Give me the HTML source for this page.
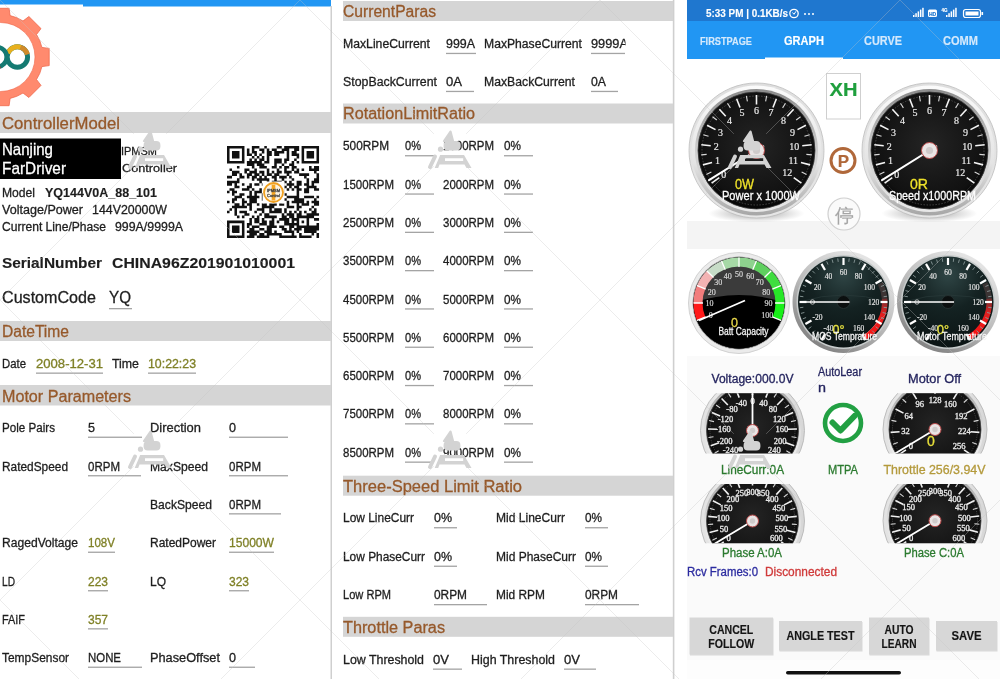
<!DOCTYPE html><html><head><meta charset="utf-8"><style>html,body{margin:0;padding:0;background:#fff;width:1000px;height:679px;overflow:hidden}svg{display:block;will-change:transform;font-family:"Liberation Sans",sans-serif}</style></head><body>
<svg width="1000" height="679" viewBox="0 0 1000 679">
<defs>
<linearGradient id="chrome" x1="0" y1="0" x2="0" y2="1"><stop offset="0" stop-color="#e4e4e4"/><stop offset="0.5" stop-color="#f6f6f6"/><stop offset="0.82" stop-color="#c4c4c4"/><stop offset="1" stop-color="#8e8e8e"/></linearGradient>
<linearGradient id="chromeIn" x1="0" y1="0" x2="0" y2="1"><stop offset="0" stop-color="#8e8e8e"/><stop offset="0.45" stop-color="#dcdcdc"/><stop offset="1" stop-color="#fafafa"/></linearGradient>
<radialGradient id="face" cx="0.5" cy="0.45" r="0.55"><stop offset="0" stop-color="#242424"/><stop offset="0.85" stop-color="#111"/><stop offset="1" stop-color="#050505"/></radialGradient>
<linearGradient id="tring" x1="0.8" y1="0" x2="0.2" y2="1"><stop offset="0" stop-color="#ececec"/><stop offset="0.5" stop-color="#bdbdbd"/><stop offset="1" stop-color="#7a7a7a"/></linearGradient>
<radialGradient id="tface" cx="0.5" cy="0.2" r="0.85"><stop offset="0" stop-color="#2f4545"/><stop offset="0.45" stop-color="#142222"/><stop offset="1" stop-color="#0a1212"/></radialGradient>
<linearGradient id="red" x1="0" y1="0" x2="0" y2="1"><stop offset="0" stop-color="#703030"/><stop offset="0.35" stop-color="#e02020"/><stop offset="1" stop-color="#ff1010"/></linearGradient>
<linearGradient id="shadow" x1="0" y1="0" x2="0" y2="1"><stop offset="0" stop-color="#9a9a9a" stop-opacity="0.8"/><stop offset="1" stop-color="#ffffff" stop-opacity="0"/></linearGradient>
<linearGradient id="bg1" x1="0" y1="0" x2="0" y2="1"><stop offset="0" stop-color="#dedede"/><stop offset="1" stop-color="#e6e6e6"/></linearGradient>
<linearGradient id="bg2" x1="0" y1="0" x2="0" y2="1"><stop offset="0" stop-color="#fbfbfb"/><stop offset="0.6" stop-color="#e4e4e4"/><stop offset="1" stop-color="#a6a6a6"/></linearGradient>
<linearGradient id="bg3" x1="0" y1="0" x2="0" y2="1"><stop offset="0" stop-color="#8c8c8c"/><stop offset="0.5" stop-color="#cdcdcd"/><stop offset="1" stop-color="#e8e8e8"/></linearGradient>
<linearGradient id="sring" x1="0" y1="0" x2="1" y2="0"><stop offset="0" stop-color="#e2e2e2"/><stop offset="0.5" stop-color="#f4f4f4"/><stop offset="1" stop-color="#d6d6d6"/></linearGradient>
<linearGradient id="sring2" x1="0" y1="0" x2="0" y2="1"><stop offset="0" stop-color="#9a9a9a"/><stop offset="0.5" stop-color="#e0e0e0"/><stop offset="1" stop-color="#fafafa"/></linearGradient>
<radialGradient id="shad2" cx="0.5" cy="0.5" r="0.5"><stop offset="0" stop-color="#707070" stop-opacity="0.7"/><stop offset="1" stop-color="#909090" stop-opacity="0"/></radialGradient>
</defs>
<rect x="0" y="0" width="1000" height="679" fill="#fff"/>
<rect x="0" y="0" width="331" height="679" fill="#ffffff"/>
<rect x="0" y="0" width="83" height="4.5" fill="#2196f3"/>
<rect x="83" y="0" width="248" height="6.5" fill="#2196f3"/>
<rect x="330.5" y="6" width="1.6" height="673" fill="#cfcfcf"/>
<path d="M39.8,40.7 L41.9,47.4 L49.2,48.4 L49.2,65.6 L41.9,66.6 L39.8,73.3 L36.5,79.5 L41.0,85.4 L28.9,97.5 L23.0,93.0 L16.8,96.3 L10.1,98.4 L9.1,105.7 L-8.1,105.7 L-9.1,98.4 L-15.8,96.3 L-22.0,93.0 L-27.9,97.5 L-40.0,85.4 L-35.5,79.5 L-38.8,73.3 L-40.9,66.6 L-48.2,65.6 L-48.2,48.4 L-40.9,47.4 L-38.8,40.7 L-35.5,34.5 L-40.0,28.6 L-27.9,16.5 L-22.0,21.0 L-15.8,17.7 L-9.1,15.6 L-8.1,8.3 L9.1,8.3 L10.1,15.6 L16.8,17.7 L23.0,21.0 L28.9,16.5 L41.0,28.6 L36.5,34.5Z" fill="#ff8a6e" stroke="#ef6a4e" stroke-width="0.8" stroke-linejoin="round"/>
<circle cx="0.5" cy="57" r="34.5" fill="#ffffff" stroke="#ef6a4e" stroke-width="0.6"/>
<circle cx="17.4" cy="57" r="10.2" fill="none" stroke="#147a72" stroke-width="4.9"/>
<path d="M7.8,53.5 A10.2 10.2 0 0 1 21,47.5" fill="none" stroke="#e8b01e" stroke-width="4.9"/>
<path d="M20.5,47.4 A10.2 10.2 0 0 1 27.4,54.5" fill="none" stroke="#cf8a2a" stroke-width="4.9"/>
<circle cx="-3" cy="57" r="9.8" fill="none" stroke="#147a72" stroke-width="4.6"/>
<path d="M0,66 A9.8 9.8 0 0 1 -3,66.8" fill="none" stroke="#b03030" stroke-width="4.6"/>
<rect x="0" y="112" width="331" height="21" fill="#d5d5d5"/>
<text x="2" y="128.5" font-size="16" fill="#96592b" textLength="118" lengthAdjust="spacingAndGlyphs" stroke="#96592b" stroke-width="0.3">ControllerModel</text>
<rect x="0" y="138.5" width="121" height="40.5" fill="#000"/>
<text x="2" y="155.4" font-size="16.5" fill="#fff" textLength="51" lengthAdjust="spacingAndGlyphs" stroke="#fff" stroke-width="0.3">Nanjing</text>
<text x="2" y="174.4" font-size="16.5" fill="#fff" textLength="64" lengthAdjust="spacingAndGlyphs" stroke="#fff" stroke-width="0.3">FarDriver</text>
<text x="121" y="155.4" font-size="11.5" fill="#1e1e1e" textLength="36" lengthAdjust="spacingAndGlyphs" stroke="#1e1e1e" stroke-width="0.3">IPMSM</text>
<text x="122" y="171.6" font-size="11.5" fill="#1e1e1e" textLength="55" lengthAdjust="spacingAndGlyphs" stroke="#1e1e1e" stroke-width="0.3">Controller</text>
<text x="2" y="196.5" font-size="12.5" fill="#1e1e1e" textLength="33" lengthAdjust="spacingAndGlyphs" stroke="#1e1e1e" stroke-width="0.3">Model</text>
<text x="45" y="196.5" font-size="12.5" fill="#1e1e1e" font-weight="bold" textLength="112" lengthAdjust="spacingAndGlyphs" stroke="#1e1e1e" stroke-width="0.15">YQ144V0A_88_101</text>
<text x="2" y="214" font-size="12.5" fill="#1e1e1e" textLength="81" lengthAdjust="spacingAndGlyphs" stroke="#1e1e1e" stroke-width="0.3">Voltage/Power</text>
<text x="92" y="214" font-size="12.5" fill="#1e1e1e" textLength="75" lengthAdjust="spacingAndGlyphs" stroke="#1e1e1e" stroke-width="0.3">144V20000W</text>
<text x="2" y="230.6" font-size="12.5" fill="#1e1e1e" textLength="104" lengthAdjust="spacingAndGlyphs" stroke="#1e1e1e" stroke-width="0.3">Current Line/Phase</text>
<text x="115" y="230.6" font-size="12.5" fill="#1e1e1e" textLength="68" lengthAdjust="spacingAndGlyphs" stroke="#1e1e1e" stroke-width="0.3">999A/9999A</text>
<path d="M227.00,146.00h2.54v2.54h-2.54zM229.49,146.00h2.54v2.54h-2.54zM231.97,146.00h2.54v2.54h-2.54zM234.46,146.00h2.54v2.54h-2.54zM236.95,146.00h2.54v2.54h-2.54zM239.43,146.00h2.54v2.54h-2.54zM241.92,146.00h2.54v2.54h-2.54zM251.86,146.00h2.54v2.54h-2.54zM254.35,146.00h2.54v2.54h-2.54zM256.84,146.00h2.54v2.54h-2.54zM264.30,146.00h2.54v2.54h-2.54zM276.73,146.00h2.54v2.54h-2.54zM279.22,146.00h2.54v2.54h-2.54zM284.19,146.00h2.54v2.54h-2.54zM286.68,146.00h2.54v2.54h-2.54zM289.16,146.00h2.54v2.54h-2.54zM291.65,146.00h2.54v2.54h-2.54zM294.14,146.00h2.54v2.54h-2.54zM296.62,146.00h2.54v2.54h-2.54zM301.59,146.00h2.54v2.54h-2.54zM304.08,146.00h2.54v2.54h-2.54zM306.57,146.00h2.54v2.54h-2.54zM309.05,146.00h2.54v2.54h-2.54zM311.54,146.00h2.54v2.54h-2.54zM314.03,146.00h2.54v2.54h-2.54zM316.51,146.00h2.54v2.54h-2.54zM227.00,148.49h2.54v2.54h-2.54zM241.92,148.49h2.54v2.54h-2.54zM246.89,148.49h2.54v2.54h-2.54zM251.86,148.49h2.54v2.54h-2.54zM259.32,148.49h2.54v2.54h-2.54zM261.81,148.49h2.54v2.54h-2.54zM266.78,148.49h2.54v2.54h-2.54zM271.76,148.49h2.54v2.54h-2.54zM274.24,148.49h2.54v2.54h-2.54zM281.70,148.49h2.54v2.54h-2.54zM284.19,148.49h2.54v2.54h-2.54zM286.68,148.49h2.54v2.54h-2.54zM294.14,148.49h2.54v2.54h-2.54zM296.62,148.49h2.54v2.54h-2.54zM301.59,148.49h2.54v2.54h-2.54zM316.51,148.49h2.54v2.54h-2.54zM227.00,150.97h2.54v2.54h-2.54zM231.97,150.97h2.54v2.54h-2.54zM234.46,150.97h2.54v2.54h-2.54zM236.95,150.97h2.54v2.54h-2.54zM241.92,150.97h2.54v2.54h-2.54zM246.89,150.97h2.54v2.54h-2.54zM251.86,150.97h2.54v2.54h-2.54zM254.35,150.97h2.54v2.54h-2.54zM261.81,150.97h2.54v2.54h-2.54zM266.78,150.97h2.54v2.54h-2.54zM269.27,150.97h2.54v2.54h-2.54zM274.24,150.97h2.54v2.54h-2.54zM276.73,150.97h2.54v2.54h-2.54zM279.22,150.97h2.54v2.54h-2.54zM281.70,150.97h2.54v2.54h-2.54zM286.68,150.97h2.54v2.54h-2.54zM291.65,150.97h2.54v2.54h-2.54zM294.14,150.97h2.54v2.54h-2.54zM301.59,150.97h2.54v2.54h-2.54zM306.57,150.97h2.54v2.54h-2.54zM309.05,150.97h2.54v2.54h-2.54zM311.54,150.97h2.54v2.54h-2.54zM316.51,150.97h2.54v2.54h-2.54zM227.00,153.46h2.54v2.54h-2.54zM231.97,153.46h2.54v2.54h-2.54zM234.46,153.46h2.54v2.54h-2.54zM236.95,153.46h2.54v2.54h-2.54zM241.92,153.46h2.54v2.54h-2.54zM246.89,153.46h2.54v2.54h-2.54zM249.38,153.46h2.54v2.54h-2.54zM254.35,153.46h2.54v2.54h-2.54zM259.32,153.46h2.54v2.54h-2.54zM266.78,153.46h2.54v2.54h-2.54zM269.27,153.46h2.54v2.54h-2.54zM274.24,153.46h2.54v2.54h-2.54zM276.73,153.46h2.54v2.54h-2.54zM286.68,153.46h2.54v2.54h-2.54zM291.65,153.46h2.54v2.54h-2.54zM294.14,153.46h2.54v2.54h-2.54zM296.62,153.46h2.54v2.54h-2.54zM301.59,153.46h2.54v2.54h-2.54zM306.57,153.46h2.54v2.54h-2.54zM309.05,153.46h2.54v2.54h-2.54zM311.54,153.46h2.54v2.54h-2.54zM316.51,153.46h2.54v2.54h-2.54zM227.00,155.95h2.54v2.54h-2.54zM231.97,155.95h2.54v2.54h-2.54zM234.46,155.95h2.54v2.54h-2.54zM236.95,155.95h2.54v2.54h-2.54zM241.92,155.95h2.54v2.54h-2.54zM251.86,155.95h2.54v2.54h-2.54zM256.84,155.95h2.54v2.54h-2.54zM261.81,155.95h2.54v2.54h-2.54zM266.78,155.95h2.54v2.54h-2.54zM286.68,155.95h2.54v2.54h-2.54zM296.62,155.95h2.54v2.54h-2.54zM301.59,155.95h2.54v2.54h-2.54zM306.57,155.95h2.54v2.54h-2.54zM309.05,155.95h2.54v2.54h-2.54zM311.54,155.95h2.54v2.54h-2.54zM316.51,155.95h2.54v2.54h-2.54zM227.00,158.43h2.54v2.54h-2.54zM241.92,158.43h2.54v2.54h-2.54zM249.38,158.43h2.54v2.54h-2.54zM254.35,158.43h2.54v2.54h-2.54zM259.32,158.43h2.54v2.54h-2.54zM261.81,158.43h2.54v2.54h-2.54zM266.78,158.43h2.54v2.54h-2.54zM274.24,158.43h2.54v2.54h-2.54zM276.73,158.43h2.54v2.54h-2.54zM279.22,158.43h2.54v2.54h-2.54zM284.19,158.43h2.54v2.54h-2.54zM286.68,158.43h2.54v2.54h-2.54zM294.14,158.43h2.54v2.54h-2.54zM301.59,158.43h2.54v2.54h-2.54zM316.51,158.43h2.54v2.54h-2.54zM227.00,160.92h2.54v2.54h-2.54zM229.49,160.92h2.54v2.54h-2.54zM231.97,160.92h2.54v2.54h-2.54zM234.46,160.92h2.54v2.54h-2.54zM236.95,160.92h2.54v2.54h-2.54zM239.43,160.92h2.54v2.54h-2.54zM241.92,160.92h2.54v2.54h-2.54zM246.89,160.92h2.54v2.54h-2.54zM249.38,160.92h2.54v2.54h-2.54zM251.86,160.92h2.54v2.54h-2.54zM254.35,160.92h2.54v2.54h-2.54zM256.84,160.92h2.54v2.54h-2.54zM259.32,160.92h2.54v2.54h-2.54zM264.30,160.92h2.54v2.54h-2.54zM266.78,160.92h2.54v2.54h-2.54zM274.24,160.92h2.54v2.54h-2.54zM276.73,160.92h2.54v2.54h-2.54zM279.22,160.92h2.54v2.54h-2.54zM284.19,160.92h2.54v2.54h-2.54zM291.65,160.92h2.54v2.54h-2.54zM296.62,160.92h2.54v2.54h-2.54zM301.59,160.92h2.54v2.54h-2.54zM304.08,160.92h2.54v2.54h-2.54zM306.57,160.92h2.54v2.54h-2.54zM309.05,160.92h2.54v2.54h-2.54zM311.54,160.92h2.54v2.54h-2.54zM314.03,160.92h2.54v2.54h-2.54zM316.51,160.92h2.54v2.54h-2.54zM246.89,163.41h2.54v2.54h-2.54zM249.38,163.41h2.54v2.54h-2.54zM251.86,163.41h2.54v2.54h-2.54zM256.84,163.41h2.54v2.54h-2.54zM259.32,163.41h2.54v2.54h-2.54zM261.81,163.41h2.54v2.54h-2.54zM274.24,163.41h2.54v2.54h-2.54zM281.70,163.41h2.54v2.54h-2.54zM289.16,163.41h2.54v2.54h-2.54zM291.65,163.41h2.54v2.54h-2.54zM236.95,165.89h2.54v2.54h-2.54zM251.86,165.89h2.54v2.54h-2.54zM259.32,165.89h2.54v2.54h-2.54zM261.81,165.89h2.54v2.54h-2.54zM264.30,165.89h2.54v2.54h-2.54zM271.76,165.89h2.54v2.54h-2.54zM274.24,165.89h2.54v2.54h-2.54zM279.22,165.89h2.54v2.54h-2.54zM284.19,165.89h2.54v2.54h-2.54zM286.68,165.89h2.54v2.54h-2.54zM291.65,165.89h2.54v2.54h-2.54zM294.14,165.89h2.54v2.54h-2.54zM309.05,165.89h2.54v2.54h-2.54zM314.03,165.89h2.54v2.54h-2.54zM316.51,165.89h2.54v2.54h-2.54zM229.49,168.38h2.54v2.54h-2.54zM244.41,168.38h2.54v2.54h-2.54zM246.89,168.38h2.54v2.54h-2.54zM254.35,168.38h2.54v2.54h-2.54zM266.78,168.38h2.54v2.54h-2.54zM276.73,168.38h2.54v2.54h-2.54zM284.19,168.38h2.54v2.54h-2.54zM291.65,168.38h2.54v2.54h-2.54zM296.62,168.38h2.54v2.54h-2.54zM301.59,168.38h2.54v2.54h-2.54zM309.05,168.38h2.54v2.54h-2.54zM311.54,168.38h2.54v2.54h-2.54zM314.03,168.38h2.54v2.54h-2.54zM316.51,168.38h2.54v2.54h-2.54zM231.97,170.86h2.54v2.54h-2.54zM234.46,170.86h2.54v2.54h-2.54zM236.95,170.86h2.54v2.54h-2.54zM244.41,170.86h2.54v2.54h-2.54zM249.38,170.86h2.54v2.54h-2.54zM251.86,170.86h2.54v2.54h-2.54zM254.35,170.86h2.54v2.54h-2.54zM259.32,170.86h2.54v2.54h-2.54zM261.81,170.86h2.54v2.54h-2.54zM266.78,170.86h2.54v2.54h-2.54zM271.76,170.86h2.54v2.54h-2.54zM276.73,170.86h2.54v2.54h-2.54zM279.22,170.86h2.54v2.54h-2.54zM284.19,170.86h2.54v2.54h-2.54zM286.68,170.86h2.54v2.54h-2.54zM289.16,170.86h2.54v2.54h-2.54zM294.14,170.86h2.54v2.54h-2.54zM296.62,170.86h2.54v2.54h-2.54zM314.03,170.86h2.54v2.54h-2.54zM231.97,173.35h2.54v2.54h-2.54zM234.46,173.35h2.54v2.54h-2.54zM239.43,173.35h2.54v2.54h-2.54zM246.89,173.35h2.54v2.54h-2.54zM249.38,173.35h2.54v2.54h-2.54zM254.35,173.35h2.54v2.54h-2.54zM256.84,173.35h2.54v2.54h-2.54zM261.81,173.35h2.54v2.54h-2.54zM266.78,173.35h2.54v2.54h-2.54zM269.27,173.35h2.54v2.54h-2.54zM274.24,173.35h2.54v2.54h-2.54zM276.73,173.35h2.54v2.54h-2.54zM286.68,173.35h2.54v2.54h-2.54zM299.11,173.35h2.54v2.54h-2.54zM301.59,173.35h2.54v2.54h-2.54zM304.08,173.35h2.54v2.54h-2.54zM306.57,173.35h2.54v2.54h-2.54zM316.51,173.35h2.54v2.54h-2.54zM227.00,175.84h2.54v2.54h-2.54zM229.49,175.84h2.54v2.54h-2.54zM239.43,175.84h2.54v2.54h-2.54zM241.92,175.84h2.54v2.54h-2.54zM246.89,175.84h2.54v2.54h-2.54zM251.86,175.84h2.54v2.54h-2.54zM254.35,175.84h2.54v2.54h-2.54zM259.32,175.84h2.54v2.54h-2.54zM264.30,175.84h2.54v2.54h-2.54zM271.76,175.84h2.54v2.54h-2.54zM274.24,175.84h2.54v2.54h-2.54zM279.22,175.84h2.54v2.54h-2.54zM281.70,175.84h2.54v2.54h-2.54zM284.19,175.84h2.54v2.54h-2.54zM289.16,175.84h2.54v2.54h-2.54zM304.08,175.84h2.54v2.54h-2.54zM316.51,175.84h2.54v2.54h-2.54zM236.95,178.32h2.54v2.54h-2.54zM251.86,178.32h2.54v2.54h-2.54zM256.84,178.32h2.54v2.54h-2.54zM259.32,178.32h2.54v2.54h-2.54zM261.81,178.32h2.54v2.54h-2.54zM264.30,178.32h2.54v2.54h-2.54zM266.78,178.32h2.54v2.54h-2.54zM274.24,178.32h2.54v2.54h-2.54zM281.70,178.32h2.54v2.54h-2.54zM291.65,178.32h2.54v2.54h-2.54zM306.57,178.32h2.54v2.54h-2.54zM314.03,178.32h2.54v2.54h-2.54zM316.51,178.32h2.54v2.54h-2.54zM227.00,180.81h2.54v2.54h-2.54zM229.49,180.81h2.54v2.54h-2.54zM231.97,180.81h2.54v2.54h-2.54zM234.46,180.81h2.54v2.54h-2.54zM236.95,180.81h2.54v2.54h-2.54zM259.32,180.81h2.54v2.54h-2.54zM266.78,180.81h2.54v2.54h-2.54zM271.76,180.81h2.54v2.54h-2.54zM274.24,180.81h2.54v2.54h-2.54zM276.73,180.81h2.54v2.54h-2.54zM279.22,180.81h2.54v2.54h-2.54zM284.19,180.81h2.54v2.54h-2.54zM289.16,180.81h2.54v2.54h-2.54zM296.62,180.81h2.54v2.54h-2.54zM299.11,180.81h2.54v2.54h-2.54zM306.57,180.81h2.54v2.54h-2.54zM311.54,180.81h2.54v2.54h-2.54zM314.03,180.81h2.54v2.54h-2.54zM316.51,180.81h2.54v2.54h-2.54zM227.00,183.30h2.54v2.54h-2.54zM229.49,183.30h2.54v2.54h-2.54zM234.46,183.30h2.54v2.54h-2.54zM241.92,183.30h2.54v2.54h-2.54zM249.38,183.30h2.54v2.54h-2.54zM254.35,183.30h2.54v2.54h-2.54zM256.84,183.30h2.54v2.54h-2.54zM261.81,183.30h2.54v2.54h-2.54zM271.76,183.30h2.54v2.54h-2.54zM281.70,183.30h2.54v2.54h-2.54zM286.68,183.30h2.54v2.54h-2.54zM289.16,183.30h2.54v2.54h-2.54zM291.65,183.30h2.54v2.54h-2.54zM296.62,183.30h2.54v2.54h-2.54zM299.11,183.30h2.54v2.54h-2.54zM304.08,183.30h2.54v2.54h-2.54zM306.57,183.30h2.54v2.54h-2.54zM311.54,183.30h2.54v2.54h-2.54zM234.46,185.78h2.54v2.54h-2.54zM236.95,185.78h2.54v2.54h-2.54zM246.89,185.78h2.54v2.54h-2.54zM249.38,185.78h2.54v2.54h-2.54zM264.30,185.78h2.54v2.54h-2.54zM266.78,185.78h2.54v2.54h-2.54zM276.73,185.78h2.54v2.54h-2.54zM279.22,185.78h2.54v2.54h-2.54zM281.70,185.78h2.54v2.54h-2.54zM284.19,185.78h2.54v2.54h-2.54zM289.16,185.78h2.54v2.54h-2.54zM294.14,185.78h2.54v2.54h-2.54zM296.62,185.78h2.54v2.54h-2.54zM306.57,185.78h2.54v2.54h-2.54zM309.05,185.78h2.54v2.54h-2.54zM311.54,185.78h2.54v2.54h-2.54zM314.03,185.78h2.54v2.54h-2.54zM229.49,188.27h2.54v2.54h-2.54zM231.97,188.27h2.54v2.54h-2.54zM241.92,188.27h2.54v2.54h-2.54zM244.41,188.27h2.54v2.54h-2.54zM246.89,188.27h2.54v2.54h-2.54zM251.86,188.27h2.54v2.54h-2.54zM259.32,188.27h2.54v2.54h-2.54zM269.27,188.27h2.54v2.54h-2.54zM271.76,188.27h2.54v2.54h-2.54zM274.24,188.27h2.54v2.54h-2.54zM279.22,188.27h2.54v2.54h-2.54zM281.70,188.27h2.54v2.54h-2.54zM286.68,188.27h2.54v2.54h-2.54zM291.65,188.27h2.54v2.54h-2.54zM296.62,188.27h2.54v2.54h-2.54zM299.11,188.27h2.54v2.54h-2.54zM304.08,188.27h2.54v2.54h-2.54zM306.57,188.27h2.54v2.54h-2.54zM314.03,188.27h2.54v2.54h-2.54zM316.51,188.27h2.54v2.54h-2.54zM227.00,190.76h2.54v2.54h-2.54zM231.97,190.76h2.54v2.54h-2.54zM234.46,190.76h2.54v2.54h-2.54zM249.38,190.76h2.54v2.54h-2.54zM254.35,190.76h2.54v2.54h-2.54zM256.84,190.76h2.54v2.54h-2.54zM259.32,190.76h2.54v2.54h-2.54zM266.78,190.76h2.54v2.54h-2.54zM269.27,190.76h2.54v2.54h-2.54zM271.76,190.76h2.54v2.54h-2.54zM274.24,190.76h2.54v2.54h-2.54zM276.73,190.76h2.54v2.54h-2.54zM279.22,190.76h2.54v2.54h-2.54zM281.70,190.76h2.54v2.54h-2.54zM296.62,190.76h2.54v2.54h-2.54zM304.08,190.76h2.54v2.54h-2.54zM306.57,190.76h2.54v2.54h-2.54zM231.97,193.24h2.54v2.54h-2.54zM239.43,193.24h2.54v2.54h-2.54zM241.92,193.24h2.54v2.54h-2.54zM249.38,193.24h2.54v2.54h-2.54zM254.35,193.24h2.54v2.54h-2.54zM261.81,193.24h2.54v2.54h-2.54zM264.30,193.24h2.54v2.54h-2.54zM274.24,193.24h2.54v2.54h-2.54zM276.73,193.24h2.54v2.54h-2.54zM284.19,193.24h2.54v2.54h-2.54zM296.62,193.24h2.54v2.54h-2.54zM234.46,195.73h2.54v2.54h-2.54zM236.95,195.73h2.54v2.54h-2.54zM239.43,195.73h2.54v2.54h-2.54zM246.89,195.73h2.54v2.54h-2.54zM249.38,195.73h2.54v2.54h-2.54zM251.86,195.73h2.54v2.54h-2.54zM254.35,195.73h2.54v2.54h-2.54zM256.84,195.73h2.54v2.54h-2.54zM261.81,195.73h2.54v2.54h-2.54zM264.30,195.73h2.54v2.54h-2.54zM266.78,195.73h2.54v2.54h-2.54zM274.24,195.73h2.54v2.54h-2.54zM276.73,195.73h2.54v2.54h-2.54zM279.22,195.73h2.54v2.54h-2.54zM286.68,195.73h2.54v2.54h-2.54zM289.16,195.73h2.54v2.54h-2.54zM291.65,195.73h2.54v2.54h-2.54zM294.14,195.73h2.54v2.54h-2.54zM296.62,195.73h2.54v2.54h-2.54zM304.08,195.73h2.54v2.54h-2.54zM306.57,195.73h2.54v2.54h-2.54zM309.05,195.73h2.54v2.54h-2.54zM311.54,195.73h2.54v2.54h-2.54zM316.51,195.73h2.54v2.54h-2.54zM231.97,198.22h2.54v2.54h-2.54zM234.46,198.22h2.54v2.54h-2.54zM241.92,198.22h2.54v2.54h-2.54zM249.38,198.22h2.54v2.54h-2.54zM251.86,198.22h2.54v2.54h-2.54zM254.35,198.22h2.54v2.54h-2.54zM261.81,198.22h2.54v2.54h-2.54zM269.27,198.22h2.54v2.54h-2.54zM276.73,198.22h2.54v2.54h-2.54zM279.22,198.22h2.54v2.54h-2.54zM281.70,198.22h2.54v2.54h-2.54zM284.19,198.22h2.54v2.54h-2.54zM294.14,198.22h2.54v2.54h-2.54zM296.62,198.22h2.54v2.54h-2.54zM299.11,198.22h2.54v2.54h-2.54zM301.59,198.22h2.54v2.54h-2.54zM314.03,198.22h2.54v2.54h-2.54zM227.00,200.70h2.54v2.54h-2.54zM231.97,200.70h2.54v2.54h-2.54zM241.92,200.70h2.54v2.54h-2.54zM244.41,200.70h2.54v2.54h-2.54zM249.38,200.70h2.54v2.54h-2.54zM251.86,200.70h2.54v2.54h-2.54zM254.35,200.70h2.54v2.54h-2.54zM264.30,200.70h2.54v2.54h-2.54zM269.27,200.70h2.54v2.54h-2.54zM274.24,200.70h2.54v2.54h-2.54zM279.22,200.70h2.54v2.54h-2.54zM286.68,200.70h2.54v2.54h-2.54zM291.65,200.70h2.54v2.54h-2.54zM294.14,200.70h2.54v2.54h-2.54zM296.62,200.70h2.54v2.54h-2.54zM299.11,200.70h2.54v2.54h-2.54zM301.59,200.70h2.54v2.54h-2.54zM306.57,200.70h2.54v2.54h-2.54zM311.54,200.70h2.54v2.54h-2.54zM314.03,200.70h2.54v2.54h-2.54zM316.51,200.70h2.54v2.54h-2.54zM234.46,203.19h2.54v2.54h-2.54zM236.95,203.19h2.54v2.54h-2.54zM241.92,203.19h2.54v2.54h-2.54zM246.89,203.19h2.54v2.54h-2.54zM249.38,203.19h2.54v2.54h-2.54zM256.84,203.19h2.54v2.54h-2.54zM261.81,203.19h2.54v2.54h-2.54zM264.30,203.19h2.54v2.54h-2.54zM269.27,203.19h2.54v2.54h-2.54zM271.76,203.19h2.54v2.54h-2.54zM274.24,203.19h2.54v2.54h-2.54zM279.22,203.19h2.54v2.54h-2.54zM281.70,203.19h2.54v2.54h-2.54zM286.68,203.19h2.54v2.54h-2.54zM296.62,203.19h2.54v2.54h-2.54zM301.59,203.19h2.54v2.54h-2.54zM304.08,203.19h2.54v2.54h-2.54zM306.57,203.19h2.54v2.54h-2.54zM314.03,203.19h2.54v2.54h-2.54zM316.51,203.19h2.54v2.54h-2.54zM231.97,205.68h2.54v2.54h-2.54zM234.46,205.68h2.54v2.54h-2.54zM236.95,205.68h2.54v2.54h-2.54zM239.43,205.68h2.54v2.54h-2.54zM241.92,205.68h2.54v2.54h-2.54zM244.41,205.68h2.54v2.54h-2.54zM249.38,205.68h2.54v2.54h-2.54zM261.81,205.68h2.54v2.54h-2.54zM264.30,205.68h2.54v2.54h-2.54zM266.78,205.68h2.54v2.54h-2.54zM269.27,205.68h2.54v2.54h-2.54zM271.76,205.68h2.54v2.54h-2.54zM286.68,205.68h2.54v2.54h-2.54zM289.16,205.68h2.54v2.54h-2.54zM291.65,205.68h2.54v2.54h-2.54zM296.62,205.68h2.54v2.54h-2.54zM299.11,205.68h2.54v2.54h-2.54zM311.54,205.68h2.54v2.54h-2.54zM229.49,208.16h2.54v2.54h-2.54zM234.46,208.16h2.54v2.54h-2.54zM249.38,208.16h2.54v2.54h-2.54zM256.84,208.16h2.54v2.54h-2.54zM259.32,208.16h2.54v2.54h-2.54zM261.81,208.16h2.54v2.54h-2.54zM269.27,208.16h2.54v2.54h-2.54zM274.24,208.16h2.54v2.54h-2.54zM276.73,208.16h2.54v2.54h-2.54zM279.22,208.16h2.54v2.54h-2.54zM284.19,208.16h2.54v2.54h-2.54zM296.62,208.16h2.54v2.54h-2.54zM309.05,208.16h2.54v2.54h-2.54zM314.03,208.16h2.54v2.54h-2.54zM227.00,210.65h2.54v2.54h-2.54zM234.46,210.65h2.54v2.54h-2.54zM239.43,210.65h2.54v2.54h-2.54zM241.92,210.65h2.54v2.54h-2.54zM244.41,210.65h2.54v2.54h-2.54zM254.35,210.65h2.54v2.54h-2.54zM261.81,210.65h2.54v2.54h-2.54zM269.27,210.65h2.54v2.54h-2.54zM271.76,210.65h2.54v2.54h-2.54zM274.24,210.65h2.54v2.54h-2.54zM276.73,210.65h2.54v2.54h-2.54zM279.22,210.65h2.54v2.54h-2.54zM284.19,210.65h2.54v2.54h-2.54zM289.16,210.65h2.54v2.54h-2.54zM294.14,210.65h2.54v2.54h-2.54zM299.11,210.65h2.54v2.54h-2.54zM304.08,210.65h2.54v2.54h-2.54zM311.54,210.65h2.54v2.54h-2.54zM314.03,210.65h2.54v2.54h-2.54zM234.46,213.14h2.54v2.54h-2.54zM244.41,213.14h2.54v2.54h-2.54zM246.89,213.14h2.54v2.54h-2.54zM259.32,213.14h2.54v2.54h-2.54zM264.30,213.14h2.54v2.54h-2.54zM266.78,213.14h2.54v2.54h-2.54zM281.70,213.14h2.54v2.54h-2.54zM286.68,213.14h2.54v2.54h-2.54zM289.16,213.14h2.54v2.54h-2.54zM291.65,213.14h2.54v2.54h-2.54zM296.62,213.14h2.54v2.54h-2.54zM299.11,213.14h2.54v2.54h-2.54zM306.57,213.14h2.54v2.54h-2.54zM309.05,213.14h2.54v2.54h-2.54zM311.54,213.14h2.54v2.54h-2.54zM314.03,213.14h2.54v2.54h-2.54zM316.51,213.14h2.54v2.54h-2.54zM236.95,215.62h2.54v2.54h-2.54zM241.92,215.62h2.54v2.54h-2.54zM251.86,215.62h2.54v2.54h-2.54zM256.84,215.62h2.54v2.54h-2.54zM264.30,215.62h2.54v2.54h-2.54zM266.78,215.62h2.54v2.54h-2.54zM269.27,215.62h2.54v2.54h-2.54zM271.76,215.62h2.54v2.54h-2.54zM274.24,215.62h2.54v2.54h-2.54zM281.70,215.62h2.54v2.54h-2.54zM284.19,215.62h2.54v2.54h-2.54zM289.16,215.62h2.54v2.54h-2.54zM291.65,215.62h2.54v2.54h-2.54zM296.62,215.62h2.54v2.54h-2.54zM299.11,215.62h2.54v2.54h-2.54zM301.59,215.62h2.54v2.54h-2.54zM304.08,215.62h2.54v2.54h-2.54zM306.57,215.62h2.54v2.54h-2.54zM309.05,215.62h2.54v2.54h-2.54zM311.54,215.62h2.54v2.54h-2.54zM249.38,218.11h2.54v2.54h-2.54zM254.35,218.11h2.54v2.54h-2.54zM256.84,218.11h2.54v2.54h-2.54zM261.81,218.11h2.54v2.54h-2.54zM271.76,218.11h2.54v2.54h-2.54zM279.22,218.11h2.54v2.54h-2.54zM281.70,218.11h2.54v2.54h-2.54zM284.19,218.11h2.54v2.54h-2.54zM286.68,218.11h2.54v2.54h-2.54zM291.65,218.11h2.54v2.54h-2.54zM294.14,218.11h2.54v2.54h-2.54zM296.62,218.11h2.54v2.54h-2.54zM306.57,218.11h2.54v2.54h-2.54zM314.03,218.11h2.54v2.54h-2.54zM316.51,218.11h2.54v2.54h-2.54zM227.00,220.59h2.54v2.54h-2.54zM229.49,220.59h2.54v2.54h-2.54zM231.97,220.59h2.54v2.54h-2.54zM234.46,220.59h2.54v2.54h-2.54zM236.95,220.59h2.54v2.54h-2.54zM239.43,220.59h2.54v2.54h-2.54zM241.92,220.59h2.54v2.54h-2.54zM249.38,220.59h2.54v2.54h-2.54zM254.35,220.59h2.54v2.54h-2.54zM256.84,220.59h2.54v2.54h-2.54zM261.81,220.59h2.54v2.54h-2.54zM264.30,220.59h2.54v2.54h-2.54zM269.27,220.59h2.54v2.54h-2.54zM271.76,220.59h2.54v2.54h-2.54zM276.73,220.59h2.54v2.54h-2.54zM284.19,220.59h2.54v2.54h-2.54zM286.68,220.59h2.54v2.54h-2.54zM291.65,220.59h2.54v2.54h-2.54zM296.62,220.59h2.54v2.54h-2.54zM301.59,220.59h2.54v2.54h-2.54zM306.57,220.59h2.54v2.54h-2.54zM227.00,223.08h2.54v2.54h-2.54zM241.92,223.08h2.54v2.54h-2.54zM246.89,223.08h2.54v2.54h-2.54zM249.38,223.08h2.54v2.54h-2.54zM259.32,223.08h2.54v2.54h-2.54zM261.81,223.08h2.54v2.54h-2.54zM264.30,223.08h2.54v2.54h-2.54zM269.27,223.08h2.54v2.54h-2.54zM271.76,223.08h2.54v2.54h-2.54zM284.19,223.08h2.54v2.54h-2.54zM286.68,223.08h2.54v2.54h-2.54zM289.16,223.08h2.54v2.54h-2.54zM291.65,223.08h2.54v2.54h-2.54zM294.14,223.08h2.54v2.54h-2.54zM296.62,223.08h2.54v2.54h-2.54zM306.57,223.08h2.54v2.54h-2.54zM316.51,223.08h2.54v2.54h-2.54zM227.00,225.57h2.54v2.54h-2.54zM231.97,225.57h2.54v2.54h-2.54zM234.46,225.57h2.54v2.54h-2.54zM236.95,225.57h2.54v2.54h-2.54zM241.92,225.57h2.54v2.54h-2.54zM246.89,225.57h2.54v2.54h-2.54zM251.86,225.57h2.54v2.54h-2.54zM254.35,225.57h2.54v2.54h-2.54zM256.84,225.57h2.54v2.54h-2.54zM266.78,225.57h2.54v2.54h-2.54zM269.27,225.57h2.54v2.54h-2.54zM271.76,225.57h2.54v2.54h-2.54zM274.24,225.57h2.54v2.54h-2.54zM279.22,225.57h2.54v2.54h-2.54zM281.70,225.57h2.54v2.54h-2.54zM289.16,225.57h2.54v2.54h-2.54zM291.65,225.57h2.54v2.54h-2.54zM296.62,225.57h2.54v2.54h-2.54zM299.11,225.57h2.54v2.54h-2.54zM301.59,225.57h2.54v2.54h-2.54zM304.08,225.57h2.54v2.54h-2.54zM306.57,225.57h2.54v2.54h-2.54zM309.05,225.57h2.54v2.54h-2.54zM311.54,225.57h2.54v2.54h-2.54zM314.03,225.57h2.54v2.54h-2.54zM316.51,225.57h2.54v2.54h-2.54zM227.00,228.05h2.54v2.54h-2.54zM231.97,228.05h2.54v2.54h-2.54zM234.46,228.05h2.54v2.54h-2.54zM236.95,228.05h2.54v2.54h-2.54zM241.92,228.05h2.54v2.54h-2.54zM249.38,228.05h2.54v2.54h-2.54zM251.86,228.05h2.54v2.54h-2.54zM259.32,228.05h2.54v2.54h-2.54zM261.81,228.05h2.54v2.54h-2.54zM266.78,228.05h2.54v2.54h-2.54zM269.27,228.05h2.54v2.54h-2.54zM281.70,228.05h2.54v2.54h-2.54zM284.19,228.05h2.54v2.54h-2.54zM289.16,228.05h2.54v2.54h-2.54zM294.14,228.05h2.54v2.54h-2.54zM296.62,228.05h2.54v2.54h-2.54zM299.11,228.05h2.54v2.54h-2.54zM304.08,228.05h2.54v2.54h-2.54zM306.57,228.05h2.54v2.54h-2.54zM309.05,228.05h2.54v2.54h-2.54zM311.54,228.05h2.54v2.54h-2.54zM314.03,228.05h2.54v2.54h-2.54zM316.51,228.05h2.54v2.54h-2.54zM227.00,230.54h2.54v2.54h-2.54zM231.97,230.54h2.54v2.54h-2.54zM234.46,230.54h2.54v2.54h-2.54zM236.95,230.54h2.54v2.54h-2.54zM241.92,230.54h2.54v2.54h-2.54zM246.89,230.54h2.54v2.54h-2.54zM249.38,230.54h2.54v2.54h-2.54zM251.86,230.54h2.54v2.54h-2.54zM254.35,230.54h2.54v2.54h-2.54zM256.84,230.54h2.54v2.54h-2.54zM264.30,230.54h2.54v2.54h-2.54zM266.78,230.54h2.54v2.54h-2.54zM269.27,230.54h2.54v2.54h-2.54zM274.24,230.54h2.54v2.54h-2.54zM284.19,230.54h2.54v2.54h-2.54zM286.68,230.54h2.54v2.54h-2.54zM289.16,230.54h2.54v2.54h-2.54zM291.65,230.54h2.54v2.54h-2.54zM296.62,230.54h2.54v2.54h-2.54zM304.08,230.54h2.54v2.54h-2.54zM306.57,230.54h2.54v2.54h-2.54zM309.05,230.54h2.54v2.54h-2.54zM311.54,230.54h2.54v2.54h-2.54zM314.03,230.54h2.54v2.54h-2.54zM227.00,233.03h2.54v2.54h-2.54zM241.92,233.03h2.54v2.54h-2.54zM249.38,233.03h2.54v2.54h-2.54zM251.86,233.03h2.54v2.54h-2.54zM254.35,233.03h2.54v2.54h-2.54zM259.32,233.03h2.54v2.54h-2.54zM261.81,233.03h2.54v2.54h-2.54zM266.78,233.03h2.54v2.54h-2.54zM269.27,233.03h2.54v2.54h-2.54zM271.76,233.03h2.54v2.54h-2.54zM274.24,233.03h2.54v2.54h-2.54zM276.73,233.03h2.54v2.54h-2.54zM279.22,233.03h2.54v2.54h-2.54zM291.65,233.03h2.54v2.54h-2.54zM299.11,233.03h2.54v2.54h-2.54zM311.54,233.03h2.54v2.54h-2.54zM316.51,233.03h2.54v2.54h-2.54zM227.00,235.51h2.54v2.54h-2.54zM229.49,235.51h2.54v2.54h-2.54zM231.97,235.51h2.54v2.54h-2.54zM234.46,235.51h2.54v2.54h-2.54zM236.95,235.51h2.54v2.54h-2.54zM239.43,235.51h2.54v2.54h-2.54zM241.92,235.51h2.54v2.54h-2.54zM246.89,235.51h2.54v2.54h-2.54zM249.38,235.51h2.54v2.54h-2.54zM251.86,235.51h2.54v2.54h-2.54zM256.84,235.51h2.54v2.54h-2.54zM259.32,235.51h2.54v2.54h-2.54zM261.81,235.51h2.54v2.54h-2.54zM264.30,235.51h2.54v2.54h-2.54zM266.78,235.51h2.54v2.54h-2.54zM279.22,235.51h2.54v2.54h-2.54zM281.70,235.51h2.54v2.54h-2.54zM284.19,235.51h2.54v2.54h-2.54zM286.68,235.51h2.54v2.54h-2.54zM289.16,235.51h2.54v2.54h-2.54zM291.65,235.51h2.54v2.54h-2.54zM294.14,235.51h2.54v2.54h-2.54zM299.11,235.51h2.54v2.54h-2.54zM301.59,235.51h2.54v2.54h-2.54zM304.08,235.51h2.54v2.54h-2.54zM306.57,235.51h2.54v2.54h-2.54zM309.05,235.51h2.54v2.54h-2.54zM316.51,235.51h2.54v2.54h-2.54z" fill="#111"/>
<rect x="262.5" y="181.5" width="22" height="22" fill="#fff"/>
<circle cx="273.5" cy="192.5" r="9.5" fill="#fdf3e0" stroke="#f0a020" stroke-width="1.8"/>
<rect x="271.7" y="184.5" width="3.6" height="16" fill="#f5a623"/>
<text x="273.5" y="191.5" font-size="4" fill="#444" text-anchor="middle" stroke="#444" stroke-width="0.3">IPMSM</text>
<text x="273.5" y="196.5" font-size="4" fill="#444" text-anchor="middle" stroke="#444" stroke-width="0.3">Control</text>
<text x="2" y="268.4" font-size="15.5" fill="#1e1e1e" font-weight="bold" textLength="100" lengthAdjust="spacingAndGlyphs" stroke="#1e1e1e" stroke-width="0.15">SerialNumber</text>
<text x="112" y="268.4" font-size="15.5" fill="#1e1e1e" font-weight="bold" textLength="183" lengthAdjust="spacingAndGlyphs" stroke="#1e1e1e" stroke-width="0.15">CHINA96Z201901010001</text>
<text x="2" y="302.6" font-size="17" fill="#1e1e1e" textLength="94" lengthAdjust="spacingAndGlyphs" stroke="#1e1e1e" stroke-width="0.3">CustomCode</text>
<text x="109" y="302.6" font-size="17" fill="#1e1e1e" textLength="22" lengthAdjust="spacingAndGlyphs" stroke="#1e1e1e" stroke-width="0.3">YQ</text>
<rect x="109" y="308" width="23" height="1.3" fill="#a4a4a4"/>
<rect x="0" y="321" width="331" height="20" fill="#d5d5d5"/>
<text x="2" y="337" font-size="16" fill="#96592b" textLength="67" lengthAdjust="spacingAndGlyphs" stroke="#96592b" stroke-width="0.3">DateTime</text>
<text x="2" y="367.6" font-size="12.5" fill="#1e1e1e" textLength="24" lengthAdjust="spacingAndGlyphs" stroke="#1e1e1e" stroke-width="0.3">Date</text>
<text x="36" y="367.6" font-size="12.5" fill="#7f8026" textLength="67" lengthAdjust="spacingAndGlyphs" stroke="#7f8026" stroke-width="0.3">2008-12-31</text>
<rect x="36" y="372.5" width="67" height="1.3" fill="#a4a4a4"/>
<text x="112" y="367.6" font-size="12.5" fill="#1e1e1e" textLength="27" lengthAdjust="spacingAndGlyphs" stroke="#1e1e1e" stroke-width="0.3">Time</text>
<text x="148" y="367.6" font-size="12.5" fill="#7f8026" textLength="48" lengthAdjust="spacingAndGlyphs" stroke="#7f8026" stroke-width="0.3">10:22:23</text>
<rect x="148" y="372.5" width="48" height="1.3" fill="#a4a4a4"/>
<rect x="0" y="385" width="331" height="20.5" fill="#d5d5d5"/>
<text x="2" y="401.5" font-size="16" fill="#96592b" textLength="129" lengthAdjust="spacingAndGlyphs" stroke="#96592b" stroke-width="0.3">Motor Parameters</text>
<text x="2" y="432" font-size="12.5" fill="#1e1e1e" textLength="53" lengthAdjust="spacingAndGlyphs" stroke="#1e1e1e" stroke-width="0.3">Pole Pairs</text>
<text x="88" y="432" font-size="12.5" fill="#1e1e1e" textLength="7" lengthAdjust="spacingAndGlyphs" stroke="#1e1e1e" stroke-width="0.3">5</text>
<rect x="88" y="436.6" width="54" height="1.3" fill="#a4a4a4"/>
<text x="150" y="432" font-size="12.5" fill="#1e1e1e" textLength="51" lengthAdjust="spacingAndGlyphs" stroke="#1e1e1e" stroke-width="0.3">Direction</text>
<text x="229" y="432" font-size="12.5" fill="#1e1e1e" textLength="7" lengthAdjust="spacingAndGlyphs" stroke="#1e1e1e" stroke-width="0.3">0</text>
<rect x="229" y="436.6" width="59" height="1.3" fill="#a4a4a4"/>
<text x="2" y="470.5" font-size="12.5" fill="#1e1e1e" textLength="66" lengthAdjust="spacingAndGlyphs" stroke="#1e1e1e" stroke-width="0.3">RatedSpeed</text>
<text x="88" y="470.5" font-size="12.5" fill="#1e1e1e" textLength="32" lengthAdjust="spacingAndGlyphs" stroke="#1e1e1e" stroke-width="0.3">0RPM</text>
<rect x="88" y="475.1" width="53" height="1.3" fill="#a4a4a4"/>
<text x="150" y="470.5" font-size="12.5" fill="#1e1e1e" textLength="58" lengthAdjust="spacingAndGlyphs" stroke="#1e1e1e" stroke-width="0.3">MaxSpeed</text>
<text x="229" y="470.5" font-size="12.5" fill="#1e1e1e" textLength="32" lengthAdjust="spacingAndGlyphs" stroke="#1e1e1e" stroke-width="0.3">0RPM</text>
<rect x="229" y="475.1" width="59" height="1.3" fill="#a4a4a4"/>
<text x="150" y="508.6" font-size="12.5" fill="#1e1e1e" textLength="62" lengthAdjust="spacingAndGlyphs" stroke="#1e1e1e" stroke-width="0.3">BackSpeed</text>
<text x="229" y="508.6" font-size="12.5" fill="#1e1e1e" textLength="32" lengthAdjust="spacingAndGlyphs" stroke="#1e1e1e" stroke-width="0.3">0RPM</text>
<rect x="229" y="513.2" width="52" height="1.3" fill="#a4a4a4"/>
<text x="2" y="547" font-size="12.5" fill="#1e1e1e" textLength="76" lengthAdjust="spacingAndGlyphs" stroke="#1e1e1e" stroke-width="0.3">RagedVoltage</text>
<text x="88" y="547" font-size="12.5" fill="#7f8026" textLength="27" lengthAdjust="spacingAndGlyphs" stroke="#7f8026" stroke-width="0.3">108V</text>
<rect x="88" y="551.6" width="27" height="1.3" fill="#a4a4a4"/>
<text x="150" y="547" font-size="12.5" fill="#1e1e1e" textLength="66" lengthAdjust="spacingAndGlyphs" stroke="#1e1e1e" stroke-width="0.3">RatedPower</text>
<text x="229" y="547" font-size="12.5" fill="#7f8026" textLength="45" lengthAdjust="spacingAndGlyphs" stroke="#7f8026" stroke-width="0.3">15000W</text>
<rect x="229" y="551.6" width="45" height="1.3" fill="#a4a4a4"/>
<text x="2" y="585.5" font-size="12.5" fill="#1e1e1e" textLength="13" lengthAdjust="spacingAndGlyphs" stroke="#1e1e1e" stroke-width="0.3">LD</text>
<text x="88" y="585.5" font-size="12.5" fill="#7f8026" textLength="20" lengthAdjust="spacingAndGlyphs" stroke="#7f8026" stroke-width="0.3">223</text>
<rect x="88" y="590.1" width="20" height="1.3" fill="#a4a4a4"/>
<text x="150" y="585.5" font-size="12.5" fill="#1e1e1e" textLength="16" lengthAdjust="spacingAndGlyphs" stroke="#1e1e1e" stroke-width="0.3">LQ</text>
<text x="229" y="585.5" font-size="12.5" fill="#7f8026" textLength="20" lengthAdjust="spacingAndGlyphs" stroke="#7f8026" stroke-width="0.3">323</text>
<rect x="229" y="590.1" width="20" height="1.3" fill="#a4a4a4"/>
<text x="2" y="623.6" font-size="12.5" fill="#1e1e1e" textLength="23" lengthAdjust="spacingAndGlyphs" stroke="#1e1e1e" stroke-width="0.3">FAIF</text>
<text x="88" y="623.6" font-size="12.5" fill="#7f8026" textLength="20" lengthAdjust="spacingAndGlyphs" stroke="#7f8026" stroke-width="0.3">357</text>
<rect x="88" y="628.2" width="20" height="1.3" fill="#a4a4a4"/>
<text x="2" y="662" font-size="12.5" fill="#1e1e1e" textLength="67" lengthAdjust="spacingAndGlyphs" stroke="#1e1e1e" stroke-width="0.3">TempSensor</text>
<text x="88" y="662" font-size="12.5" fill="#1e1e1e" textLength="33" lengthAdjust="spacingAndGlyphs" stroke="#1e1e1e" stroke-width="0.3">NONE</text>
<rect x="88" y="666.6" width="54" height="1.3" fill="#a4a4a4"/>
<text x="150" y="662" font-size="12.5" fill="#1e1e1e" textLength="70" lengthAdjust="spacingAndGlyphs" stroke="#1e1e1e" stroke-width="0.3">PhaseOffset</text>
<text x="229" y="662" font-size="12.5" fill="#1e1e1e" textLength="7" lengthAdjust="spacingAndGlyphs" stroke="#1e1e1e" stroke-width="0.3">0</text>
<rect x="229" y="666.6" width="26" height="1.3" fill="#a4a4a4"/>
<rect x="332" y="0" width="342" height="679" fill="#ffffff"/>
<rect x="672.8" y="0" width="1.6" height="679" fill="#cfcfcf"/>
<rect x="343" y="1" width="330" height="20" fill="#d5d5d5"/>
<text x="343" y="16.5" font-size="16" fill="#96592b" textLength="93" lengthAdjust="spacingAndGlyphs" stroke="#96592b" stroke-width="0.3">CurrentParas</text>
<clipPath id="clip9"><rect x="580" y="30" width="45.5" height="30"/></clipPath>
<text x="343" y="48" font-size="12.5" fill="#1e1e1e" textLength="87" lengthAdjust="spacingAndGlyphs" stroke="#1e1e1e" stroke-width="0.3">MaxLineCurrent</text>
<text x="446" y="48" font-size="12.5" fill="#1e1e1e" textLength="29" lengthAdjust="spacingAndGlyphs" stroke="#1e1e1e" stroke-width="0.3">999A</text>
<rect x="446" y="52.8" width="30" height="1.3" fill="#a4a4a4"/>
<text x="484" y="48" font-size="12.5" fill="#1e1e1e" textLength="98" lengthAdjust="spacingAndGlyphs" stroke="#1e1e1e" stroke-width="0.3">MaxPhaseCurrent</text>
<g clip-path="url(#clip9)">
<text x="591" y="48" font-size="12.5" fill="#1e1e1e" textLength="37" lengthAdjust="spacingAndGlyphs" stroke="#1e1e1e" stroke-width="0.3">9999A</text>
</g>
<rect x="591" y="52.8" width="34" height="1.3" fill="#a4a4a4"/>
<text x="343" y="86" font-size="12.5" fill="#1e1e1e" textLength="94" lengthAdjust="spacingAndGlyphs" stroke="#1e1e1e" stroke-width="0.3">StopBackCurrent</text>
<text x="446" y="86" font-size="12.5" fill="#1e1e1e" textLength="16" lengthAdjust="spacingAndGlyphs" stroke="#1e1e1e" stroke-width="0.3">0A</text>
<rect x="446" y="90.8" width="28" height="1.3" fill="#a4a4a4"/>
<text x="484" y="86" font-size="12.5" fill="#1e1e1e" textLength="91" lengthAdjust="spacingAndGlyphs" stroke="#1e1e1e" stroke-width="0.3">MaxBackCurrent</text>
<text x="591" y="86" font-size="12.5" fill="#1e1e1e" textLength="15" lengthAdjust="spacingAndGlyphs" stroke="#1e1e1e" stroke-width="0.3">0A</text>
<rect x="591" y="90.8" width="27" height="1.3" fill="#a4a4a4"/>
<rect x="343" y="103.5" width="330" height="20" fill="#d5d5d5"/>
<text x="343" y="119" font-size="16" fill="#96592b" textLength="132" lengthAdjust="spacingAndGlyphs" stroke="#96592b" stroke-width="0.3">RotationLimitRatio</text>
<text x="343" y="150.3" font-size="12.5" fill="#1e1e1e" textLength="46" lengthAdjust="spacingAndGlyphs" stroke="#1e1e1e" stroke-width="0.3">500RPM</text>
<text x="405" y="150.3" font-size="12.5" fill="#1e1e1e" textLength="16" lengthAdjust="spacingAndGlyphs" stroke="#1e1e1e" stroke-width="0.3">0%</text>
<rect x="405" y="155.10000000000002" width="29" height="1.3" fill="#a4a4a4"/>
<text x="443" y="150.3" font-size="12.5" fill="#1e1e1e" textLength="51" lengthAdjust="spacingAndGlyphs" stroke="#1e1e1e" stroke-width="0.3">1000RPM</text>
<text x="504" y="150.3" font-size="12.5" fill="#1e1e1e" textLength="17" lengthAdjust="spacingAndGlyphs" stroke="#1e1e1e" stroke-width="0.3">0%</text>
<rect x="504" y="155.10000000000002" width="29" height="1.3" fill="#a4a4a4"/>
<text x="343" y="188.60000000000002" font-size="12.5" fill="#1e1e1e" textLength="51" lengthAdjust="spacingAndGlyphs" stroke="#1e1e1e" stroke-width="0.3">1500RPM</text>
<text x="405" y="188.60000000000002" font-size="12.5" fill="#1e1e1e" textLength="16" lengthAdjust="spacingAndGlyphs" stroke="#1e1e1e" stroke-width="0.3">0%</text>
<rect x="405" y="193.40000000000003" width="29" height="1.3" fill="#a4a4a4"/>
<text x="443" y="188.60000000000002" font-size="12.5" fill="#1e1e1e" textLength="51" lengthAdjust="spacingAndGlyphs" stroke="#1e1e1e" stroke-width="0.3">2000RPM</text>
<text x="504" y="188.60000000000002" font-size="12.5" fill="#1e1e1e" textLength="17" lengthAdjust="spacingAndGlyphs" stroke="#1e1e1e" stroke-width="0.3">0%</text>
<rect x="504" y="193.40000000000003" width="29" height="1.3" fill="#a4a4a4"/>
<text x="343" y="226.9" font-size="12.5" fill="#1e1e1e" textLength="51" lengthAdjust="spacingAndGlyphs" stroke="#1e1e1e" stroke-width="0.3">2500RPM</text>
<text x="405" y="226.9" font-size="12.5" fill="#1e1e1e" textLength="16" lengthAdjust="spacingAndGlyphs" stroke="#1e1e1e" stroke-width="0.3">0%</text>
<rect x="405" y="231.70000000000002" width="29" height="1.3" fill="#a4a4a4"/>
<text x="443" y="226.9" font-size="12.5" fill="#1e1e1e" textLength="51" lengthAdjust="spacingAndGlyphs" stroke="#1e1e1e" stroke-width="0.3">3000RPM</text>
<text x="504" y="226.9" font-size="12.5" fill="#1e1e1e" textLength="17" lengthAdjust="spacingAndGlyphs" stroke="#1e1e1e" stroke-width="0.3">0%</text>
<rect x="504" y="231.70000000000002" width="29" height="1.3" fill="#a4a4a4"/>
<text x="343" y="265.2" font-size="12.5" fill="#1e1e1e" textLength="51" lengthAdjust="spacingAndGlyphs" stroke="#1e1e1e" stroke-width="0.3">3500RPM</text>
<text x="405" y="265.2" font-size="12.5" fill="#1e1e1e" textLength="16" lengthAdjust="spacingAndGlyphs" stroke="#1e1e1e" stroke-width="0.3">0%</text>
<rect x="405" y="270.0" width="29" height="1.3" fill="#a4a4a4"/>
<text x="443" y="265.2" font-size="12.5" fill="#1e1e1e" textLength="51" lengthAdjust="spacingAndGlyphs" stroke="#1e1e1e" stroke-width="0.3">4000RPM</text>
<text x="504" y="265.2" font-size="12.5" fill="#1e1e1e" textLength="17" lengthAdjust="spacingAndGlyphs" stroke="#1e1e1e" stroke-width="0.3">0%</text>
<rect x="504" y="270.0" width="29" height="1.3" fill="#a4a4a4"/>
<text x="343" y="303.5" font-size="12.5" fill="#1e1e1e" textLength="51" lengthAdjust="spacingAndGlyphs" stroke="#1e1e1e" stroke-width="0.3">4500RPM</text>
<text x="405" y="303.5" font-size="12.5" fill="#1e1e1e" textLength="16" lengthAdjust="spacingAndGlyphs" stroke="#1e1e1e" stroke-width="0.3">0%</text>
<rect x="405" y="308.3" width="29" height="1.3" fill="#a4a4a4"/>
<text x="443" y="303.5" font-size="12.5" fill="#1e1e1e" textLength="51" lengthAdjust="spacingAndGlyphs" stroke="#1e1e1e" stroke-width="0.3">5000RPM</text>
<text x="504" y="303.5" font-size="12.5" fill="#1e1e1e" textLength="17" lengthAdjust="spacingAndGlyphs" stroke="#1e1e1e" stroke-width="0.3">0%</text>
<rect x="504" y="308.3" width="29" height="1.3" fill="#a4a4a4"/>
<text x="343" y="341.8" font-size="12.5" fill="#1e1e1e" textLength="51" lengthAdjust="spacingAndGlyphs" stroke="#1e1e1e" stroke-width="0.3">5500RPM</text>
<text x="405" y="341.8" font-size="12.5" fill="#1e1e1e" textLength="16" lengthAdjust="spacingAndGlyphs" stroke="#1e1e1e" stroke-width="0.3">0%</text>
<rect x="405" y="346.6" width="29" height="1.3" fill="#a4a4a4"/>
<text x="443" y="341.8" font-size="12.5" fill="#1e1e1e" textLength="51" lengthAdjust="spacingAndGlyphs" stroke="#1e1e1e" stroke-width="0.3">6000RPM</text>
<text x="504" y="341.8" font-size="12.5" fill="#1e1e1e" textLength="17" lengthAdjust="spacingAndGlyphs" stroke="#1e1e1e" stroke-width="0.3">0%</text>
<rect x="504" y="346.6" width="29" height="1.3" fill="#a4a4a4"/>
<text x="343" y="380.1" font-size="12.5" fill="#1e1e1e" textLength="51" lengthAdjust="spacingAndGlyphs" stroke="#1e1e1e" stroke-width="0.3">6500RPM</text>
<text x="405" y="380.1" font-size="12.5" fill="#1e1e1e" textLength="16" lengthAdjust="spacingAndGlyphs" stroke="#1e1e1e" stroke-width="0.3">0%</text>
<rect x="405" y="384.90000000000003" width="29" height="1.3" fill="#a4a4a4"/>
<text x="443" y="380.1" font-size="12.5" fill="#1e1e1e" textLength="51" lengthAdjust="spacingAndGlyphs" stroke="#1e1e1e" stroke-width="0.3">7000RPM</text>
<text x="504" y="380.1" font-size="12.5" fill="#1e1e1e" textLength="17" lengthAdjust="spacingAndGlyphs" stroke="#1e1e1e" stroke-width="0.3">0%</text>
<rect x="504" y="384.90000000000003" width="29" height="1.3" fill="#a4a4a4"/>
<text x="343" y="418.4" font-size="12.5" fill="#1e1e1e" textLength="51" lengthAdjust="spacingAndGlyphs" stroke="#1e1e1e" stroke-width="0.3">7500RPM</text>
<text x="405" y="418.4" font-size="12.5" fill="#1e1e1e" textLength="16" lengthAdjust="spacingAndGlyphs" stroke="#1e1e1e" stroke-width="0.3">0%</text>
<rect x="405" y="423.2" width="29" height="1.3" fill="#a4a4a4"/>
<text x="443" y="418.4" font-size="12.5" fill="#1e1e1e" textLength="51" lengthAdjust="spacingAndGlyphs" stroke="#1e1e1e" stroke-width="0.3">8000RPM</text>
<text x="504" y="418.4" font-size="12.5" fill="#1e1e1e" textLength="17" lengthAdjust="spacingAndGlyphs" stroke="#1e1e1e" stroke-width="0.3">0%</text>
<rect x="504" y="423.2" width="29" height="1.3" fill="#a4a4a4"/>
<text x="343" y="456.7" font-size="12.5" fill="#1e1e1e" textLength="51" lengthAdjust="spacingAndGlyphs" stroke="#1e1e1e" stroke-width="0.3">8500RPM</text>
<text x="405" y="456.7" font-size="12.5" fill="#1e1e1e" textLength="16" lengthAdjust="spacingAndGlyphs" stroke="#1e1e1e" stroke-width="0.3">0%</text>
<rect x="405" y="461.5" width="29" height="1.3" fill="#a4a4a4"/>
<text x="443" y="456.7" font-size="12.5" fill="#1e1e1e" textLength="51" lengthAdjust="spacingAndGlyphs" stroke="#1e1e1e" stroke-width="0.3">9000RPM</text>
<text x="504" y="456.7" font-size="12.5" fill="#1e1e1e" textLength="17" lengthAdjust="spacingAndGlyphs" stroke="#1e1e1e" stroke-width="0.3">0%</text>
<rect x="504" y="461.5" width="29" height="1.3" fill="#a4a4a4"/>
<rect x="343" y="475.7" width="330" height="20" fill="#d5d5d5"/>
<text x="343" y="491.5" font-size="16" fill="#96592b" textLength="179" lengthAdjust="spacingAndGlyphs" stroke="#96592b" stroke-width="0.3">Three-Speed Limit Ratio</text>
<text x="343" y="522.3" font-size="12.5" fill="#1e1e1e" textLength="71" lengthAdjust="spacingAndGlyphs" stroke="#1e1e1e" stroke-width="0.3">Low LineCurr</text>
<text x="434" y="522.3" font-size="12.5" fill="#1e1e1e" textLength="18" lengthAdjust="spacingAndGlyphs" stroke="#1e1e1e" stroke-width="0.3">0%</text>
<rect x="434" y="527.0999999999999" width="23" height="1.3" fill="#a4a4a4"/>
<text x="496" y="522.3" font-size="12.5" fill="#1e1e1e" textLength="69" lengthAdjust="spacingAndGlyphs" stroke="#1e1e1e" stroke-width="0.3">Mid LineCurr</text>
<text x="585" y="522.3" font-size="12.5" fill="#1e1e1e" textLength="17" lengthAdjust="spacingAndGlyphs" stroke="#1e1e1e" stroke-width="0.3">0%</text>
<rect x="585" y="527.0999999999999" width="23" height="1.3" fill="#a4a4a4"/>
<text x="343" y="560.8" font-size="12.5" fill="#1e1e1e" textLength="82" lengthAdjust="spacingAndGlyphs" stroke="#1e1e1e" stroke-width="0.3">Low PhaseCurr</text>
<text x="434" y="560.8" font-size="12.5" fill="#1e1e1e" textLength="18" lengthAdjust="spacingAndGlyphs" stroke="#1e1e1e" stroke-width="0.3">0%</text>
<rect x="434" y="565.5999999999999" width="23" height="1.3" fill="#a4a4a4"/>
<text x="496" y="560.8" font-size="12.5" fill="#1e1e1e" textLength="80" lengthAdjust="spacingAndGlyphs" stroke="#1e1e1e" stroke-width="0.3">Mid PhaseCurr</text>
<text x="585" y="560.8" font-size="12.5" fill="#1e1e1e" textLength="17" lengthAdjust="spacingAndGlyphs" stroke="#1e1e1e" stroke-width="0.3">0%</text>
<rect x="585" y="565.5999999999999" width="23" height="1.3" fill="#a4a4a4"/>
<text x="343" y="599.2" font-size="12.5" fill="#1e1e1e" textLength="48" lengthAdjust="spacingAndGlyphs" stroke="#1e1e1e" stroke-width="0.3">Low RPM</text>
<text x="434" y="599.2" font-size="12.5" fill="#1e1e1e" textLength="33" lengthAdjust="spacingAndGlyphs" stroke="#1e1e1e" stroke-width="0.3">0RPM</text>
<rect x="434" y="604.0" width="53" height="1.3" fill="#a4a4a4"/>
<text x="496" y="599.2" font-size="12.5" fill="#1e1e1e" textLength="49" lengthAdjust="spacingAndGlyphs" stroke="#1e1e1e" stroke-width="0.3">Mid RPM</text>
<text x="585" y="599.2" font-size="12.5" fill="#1e1e1e" textLength="33" lengthAdjust="spacingAndGlyphs" stroke="#1e1e1e" stroke-width="0.3">0RPM</text>
<rect x="585" y="604.0" width="54" height="1.3" fill="#a4a4a4"/>
<rect x="343" y="616.8" width="330" height="20" fill="#d5d5d5"/>
<text x="343" y="632.5" font-size="16" fill="#96592b" textLength="102" lengthAdjust="spacingAndGlyphs" stroke="#96592b" stroke-width="0.3">Throttle Paras</text>
<text x="343" y="663.7" font-size="12.5" fill="#1e1e1e" textLength="81" lengthAdjust="spacingAndGlyphs" stroke="#1e1e1e" stroke-width="0.3">Low Threshold</text>
<text x="433" y="663.7" font-size="12.5" fill="#1e1e1e" textLength="16" lengthAdjust="spacingAndGlyphs" stroke="#1e1e1e" stroke-width="0.3">0V</text>
<rect x="433" y="668.5" width="29" height="1.3" fill="#a4a4a4"/>
<text x="471" y="663.7" font-size="12.5" fill="#1e1e1e" textLength="84" lengthAdjust="spacingAndGlyphs" stroke="#1e1e1e" stroke-width="0.3">High Threshold</text>
<text x="564" y="663.7" font-size="12.5" fill="#1e1e1e" textLength="16" lengthAdjust="spacingAndGlyphs" stroke="#1e1e1e" stroke-width="0.3">0V</text>
<rect x="564" y="668.5" width="32" height="1.3" fill="#a4a4a4"/>
<rect x="687" y="0" width="313" height="679" fill="#fafafa"/>
<rect x="687" y="660" width="313" height="19" fill="#fdfdfd"/>
<rect x="687" y="58" width="313" height="175" fill="#ffffff"/>
<rect x="687" y="248" width="313" height="108" fill="#ffffff"/>
<rect x="687" y="221" width="313" height="28" fill="#f4f4f4"/>
<rect x="687" y="0" width="313" height="21" fill="#1f77cf"/>
<rect x="687" y="21" width="313" height="38" fill="#2196f3"/>
<rect x="765" y="57.5" width="78" height="2.5" fill="#ffffff"/>
<text x="706" y="17" font-size="11.5" fill="#fff" font-weight="bold" textLength="82" lengthAdjust="spacingAndGlyphs" stroke="#fff" stroke-width="0.15">5:33 PM | 0.1KB/s</text>
<circle cx="794" cy="13.5" r="4.2" fill="none" stroke="#fff" stroke-width="1.3"/><path d="M792.5,12.5 l1.5,1.8 l2,-3" fill="none" stroke="#fff" stroke-width="1"/>
<circle cx="805" cy="14" r="1" fill="#fff"/><circle cx="809" cy="14" r="1" fill="#fff"/><circle cx="813" cy="14" r="1" fill="#fff"/>
<rect x="913.0" y="15.0" width="1.5" height="2.0" fill="#fff"/>
<rect x="915.3" y="13.2" width="1.5" height="3.8" fill="#fff"/>
<rect x="917.6" y="11.4" width="1.5" height="5.6" fill="#fff"/>
<rect x="919.9" y="9.6" width="1.5" height="7.4" fill="#fff"/>
<rect x="922.2" y="7.800000000000001" width="1.5" height="9.2" fill="#fff"/>
<rect x="928" y="9.5" width="9" height="7.5" rx="1.5" fill="#fff"/>
<text x="932.5" y="15.5" font-size="5" fill="#1f77cf" font-weight="bold" text-anchor="middle" stroke="#1f77cf" stroke-width="0.15">HD</text>
<text x="941.5" y="12" font-size="4.5" fill="#fff" font-weight="bold" stroke="#fff" stroke-width="0.15">4G</text>
<rect x="946.0" y="15.0" width="1.5" height="2.0" fill="#fff"/>
<rect x="948.3" y="13.2" width="1.5" height="3.8" fill="#fff"/>
<rect x="950.6" y="11.4" width="1.5" height="5.6" fill="#fff"/>
<rect x="952.9" y="9.6" width="1.5" height="7.4" fill="#fff"/>
<rect x="955.2" y="7.800000000000001" width="1.5" height="9.2" fill="#fff"/>
<rect x="963.5" y="9.5" width="17" height="8" rx="2.2" fill="none" stroke="#fff" stroke-width="1.2"/><rect x="965.5" y="11.5" width="13" height="4" fill="#fff"/><rect x="981.5" y="12" width="1.6" height="3" fill="#fff"/>
<text x="700" y="45" font-size="11.5" fill="#d4e9fc" font-weight="bold" textLength="52" lengthAdjust="spacingAndGlyphs" stroke="#d4e9fc" stroke-width="0.15">FIRSTPAGE</text>
<text x="784" y="45" font-size="12.5" fill="#ffffff" font-weight="bold" textLength="40" lengthAdjust="spacingAndGlyphs" stroke="#ffffff" stroke-width="0.15">GRAPH</text>
<text x="864" y="45" font-size="12.5" fill="#d4e9fc" font-weight="bold" textLength="38" lengthAdjust="spacingAndGlyphs" stroke="#d4e9fc" stroke-width="0.15">CURVE</text>
<text x="943" y="45" font-size="12.5" fill="#d4e9fc" font-weight="bold" textLength="35" lengthAdjust="spacingAndGlyphs" stroke="#d4e9fc" stroke-width="0.15">COMM</text>
<ellipse cx="756.5" cy="213.5" rx="48" ry="9" fill="url(#shad2)"/>
<circle cx="756.5" cy="150.5" r="67.5" fill="url(#bg1)" stroke="#bdbdbd" stroke-width="0.8"/>
<circle cx="756.5" cy="150.5" r="65" fill="url(#bg2)"/>
<circle cx="756.5" cy="150.5" r="61.5" fill="url(#bg3)"/>
<circle cx="756.5" cy="150.5" r="58.5" fill="url(#face)" stroke="#3a3a3a" stroke-width="0.8"/>
<circle cx="756.5" cy="150.5" r="54.5" fill="none" stroke="#777" stroke-width="0.5" stroke-dasharray="1.5,1.5"/>
<line x1="711.60" y1="183.12" x2="719.29" y2="177.54" stroke="#f4f4f4" stroke-width="1.6"/>
<line x1="706.41" y1="174.39" x2="711.37" y2="172.03" stroke="#d8d8d8" stroke-width="1.1"/>
<line x1="702.89" y1="164.86" x2="712.07" y2="162.41" stroke="#f4f4f4" stroke-width="1.6"/>
<line x1="701.17" y1="154.85" x2="706.65" y2="154.42" stroke="#d8d8d8" stroke-width="1.1"/>
<line x1="701.30" y1="144.70" x2="710.75" y2="145.69" stroke="#f4f4f4" stroke-width="1.6"/>
<line x1="703.29" y1="134.74" x2="708.56" y2="136.30" stroke="#d8d8d8" stroke-width="1.1"/>
<line x1="707.05" y1="125.30" x2="715.51" y2="129.62" stroke="#f4f4f4" stroke-width="1.6"/>
<line x1="712.47" y1="116.71" x2="716.83" y2="120.06" stroke="#d8d8d8" stroke-width="1.1"/>
<line x1="719.36" y1="109.26" x2="725.72" y2="116.32" stroke="#f4f4f4" stroke-width="1.6"/>
<line x1="727.50" y1="103.18" x2="730.38" y2="107.87" stroke="#d8d8d8" stroke-width="1.1"/>
<line x1="736.61" y1="98.69" x2="740.02" y2="107.56" stroke="#f4f4f4" stroke-width="1.6"/>
<line x1="746.39" y1="95.93" x2="747.39" y2="101.34" stroke="#d8d8d8" stroke-width="1.1"/>
<line x1="756.50" y1="95.00" x2="756.50" y2="104.50" stroke="#f4f4f4" stroke-width="1.6"/>
<line x1="766.61" y1="95.93" x2="765.61" y2="101.34" stroke="#d8d8d8" stroke-width="1.1"/>
<line x1="776.39" y1="98.69" x2="772.98" y2="107.56" stroke="#f4f4f4" stroke-width="1.6"/>
<line x1="785.50" y1="103.18" x2="782.62" y2="107.87" stroke="#d8d8d8" stroke-width="1.1"/>
<line x1="793.64" y1="109.26" x2="787.28" y2="116.32" stroke="#f4f4f4" stroke-width="1.6"/>
<line x1="800.53" y1="116.71" x2="796.17" y2="120.06" stroke="#d8d8d8" stroke-width="1.1"/>
<line x1="805.95" y1="125.30" x2="797.49" y2="129.62" stroke="#f4f4f4" stroke-width="1.6"/>
<line x1="809.71" y1="134.74" x2="804.44" y2="136.30" stroke="#d8d8d8" stroke-width="1.1"/>
<line x1="811.70" y1="144.70" x2="802.25" y2="145.69" stroke="#f4f4f4" stroke-width="1.6"/>
<line x1="811.83" y1="154.85" x2="806.35" y2="154.42" stroke="#d8d8d8" stroke-width="1.1"/>
<line x1="810.11" y1="164.86" x2="800.93" y2="162.41" stroke="#f4f4f4" stroke-width="1.6"/>
<line x1="806.59" y1="174.39" x2="801.63" y2="172.03" stroke="#d8d8d8" stroke-width="1.1"/>
<line x1="801.40" y1="183.12" x2="793.71" y2="177.54" stroke="#f4f4f4" stroke-width="1.6"/>
<text x="723.73" y="177.81" font-size="10" fill="#e6e6e6" text-anchor="middle" font-family="Liberation Serif" stroke="#e6e6e6" stroke-width="0.2">0</text>
<text x="717.38" y="164.48" font-size="10" fill="#e6e6e6" text-anchor="middle" font-family="Liberation Serif" stroke="#e6e6e6" stroke-width="0.2">1</text>
<text x="716.22" y="149.77" font-size="10" fill="#e6e6e6" text-anchor="middle" font-family="Liberation Serif" stroke="#e6e6e6" stroke-width="0.2">2</text>
<text x="720.41" y="135.61" font-size="10" fill="#e6e6e6" text-anchor="middle" font-family="Liberation Serif" stroke="#e6e6e6" stroke-width="0.2">3</text>
<text x="729.4" y="123.9" font-size="10" fill="#e6e6e6" text-anchor="middle" font-family="Liberation Serif" stroke="#e6e6e6" stroke-width="0.2">4</text>
<text x="741.99" y="116.19" font-size="10" fill="#e6e6e6" text-anchor="middle" font-family="Liberation Serif" stroke="#e6e6e6" stroke-width="0.2">5</text>
<text x="756.5" y="113.5" font-size="10" fill="#e6e6e6" text-anchor="middle" font-family="Liberation Serif" stroke="#e6e6e6" stroke-width="0.2">6</text>
<text x="771.01" y="116.19" font-size="10" fill="#e6e6e6" text-anchor="middle" font-family="Liberation Serif" stroke="#e6e6e6" stroke-width="0.2">7</text>
<text x="783.6" y="123.9" font-size="10" fill="#e6e6e6" text-anchor="middle" font-family="Liberation Serif" stroke="#e6e6e6" stroke-width="0.2">8</text>
<text x="792.59" y="135.61" font-size="10" fill="#e6e6e6" text-anchor="middle" font-family="Liberation Serif" stroke="#e6e6e6" stroke-width="0.2">9</text>
<text x="794.29" y="150.03" font-size="10" fill="#e6e6e6" text-anchor="middle" font-family="Liberation Serif" stroke="#e6e6e6" stroke-width="0.2">10</text>
<text x="793.21" y="163.84" font-size="10" fill="#e6e6e6" text-anchor="middle" font-family="Liberation Serif" stroke="#e6e6e6" stroke-width="0.2">11</text>
<text x="787.24" y="176.34" font-size="10" fill="#e6e6e6" text-anchor="middle" font-family="Liberation Serif" stroke="#e6e6e6" stroke-width="0.2">12</text>
<line x1="763.28" y1="146.26" x2="709.01" y2="180.18" stroke="#fff" stroke-width="2" stroke-linecap="round"/>
<circle cx="756.5" cy="150.5" r="8" fill="#e9e4e4" stroke="#b84848" stroke-width="1"/>
<circle cx="756.5" cy="150.5" r="3.6" fill="#cfcaca"/>
<text x="735" y="189.0" font-size="14" fill="#efe22a" textLength="19" lengthAdjust="spacingAndGlyphs" stroke="#efe22a" stroke-width="0.3">0W</text>
<text x="722" y="199.5" font-size="12.5" fill="#ffffff" textLength="78" lengthAdjust="spacingAndGlyphs" stroke="#ffffff" stroke-width="0.3">Power x 1000W</text>
<ellipse cx="929.5" cy="213.5" rx="48" ry="9" fill="url(#shad2)"/>
<circle cx="929.5" cy="150.5" r="67.5" fill="url(#bg1)" stroke="#bdbdbd" stroke-width="0.8"/>
<circle cx="929.5" cy="150.5" r="65" fill="url(#bg2)"/>
<circle cx="929.5" cy="150.5" r="61.5" fill="url(#bg3)"/>
<circle cx="929.5" cy="150.5" r="58.5" fill="url(#face)" stroke="#3a3a3a" stroke-width="0.8"/>
<circle cx="929.5" cy="150.5" r="54.5" fill="none" stroke="#777" stroke-width="0.5" stroke-dasharray="1.5,1.5"/>
<line x1="884.60" y1="183.12" x2="892.29" y2="177.54" stroke="#f4f4f4" stroke-width="1.6"/>
<line x1="879.41" y1="174.39" x2="884.37" y2="172.03" stroke="#d8d8d8" stroke-width="1.1"/>
<line x1="875.89" y1="164.86" x2="885.07" y2="162.41" stroke="#f4f4f4" stroke-width="1.6"/>
<line x1="874.17" y1="154.85" x2="879.65" y2="154.42" stroke="#d8d8d8" stroke-width="1.1"/>
<line x1="874.30" y1="144.70" x2="883.75" y2="145.69" stroke="#f4f4f4" stroke-width="1.6"/>
<line x1="876.29" y1="134.74" x2="881.56" y2="136.30" stroke="#d8d8d8" stroke-width="1.1"/>
<line x1="880.05" y1="125.30" x2="888.51" y2="129.62" stroke="#f4f4f4" stroke-width="1.6"/>
<line x1="885.47" y1="116.71" x2="889.83" y2="120.06" stroke="#d8d8d8" stroke-width="1.1"/>
<line x1="892.36" y1="109.26" x2="898.72" y2="116.32" stroke="#f4f4f4" stroke-width="1.6"/>
<line x1="900.50" y1="103.18" x2="903.38" y2="107.87" stroke="#d8d8d8" stroke-width="1.1"/>
<line x1="909.61" y1="98.69" x2="913.02" y2="107.56" stroke="#f4f4f4" stroke-width="1.6"/>
<line x1="919.39" y1="95.93" x2="920.39" y2="101.34" stroke="#d8d8d8" stroke-width="1.1"/>
<line x1="929.50" y1="95.00" x2="929.50" y2="104.50" stroke="#f4f4f4" stroke-width="1.6"/>
<line x1="939.61" y1="95.93" x2="938.61" y2="101.34" stroke="#d8d8d8" stroke-width="1.1"/>
<line x1="949.39" y1="98.69" x2="945.98" y2="107.56" stroke="#f4f4f4" stroke-width="1.6"/>
<line x1="958.50" y1="103.18" x2="955.62" y2="107.87" stroke="#d8d8d8" stroke-width="1.1"/>
<line x1="966.64" y1="109.26" x2="960.28" y2="116.32" stroke="#f4f4f4" stroke-width="1.6"/>
<line x1="973.53" y1="116.71" x2="969.17" y2="120.06" stroke="#d8d8d8" stroke-width="1.1"/>
<line x1="978.95" y1="125.30" x2="970.49" y2="129.62" stroke="#f4f4f4" stroke-width="1.6"/>
<line x1="982.71" y1="134.74" x2="977.44" y2="136.30" stroke="#d8d8d8" stroke-width="1.1"/>
<line x1="984.70" y1="144.70" x2="975.25" y2="145.69" stroke="#f4f4f4" stroke-width="1.6"/>
<line x1="984.83" y1="154.85" x2="979.35" y2="154.42" stroke="#d8d8d8" stroke-width="1.1"/>
<line x1="983.11" y1="164.86" x2="973.93" y2="162.41" stroke="#f4f4f4" stroke-width="1.6"/>
<line x1="979.59" y1="174.39" x2="974.63" y2="172.03" stroke="#d8d8d8" stroke-width="1.1"/>
<line x1="974.40" y1="183.12" x2="966.71" y2="177.54" stroke="#f4f4f4" stroke-width="1.6"/>
<text x="896.73" y="177.81" font-size="10" fill="#e6e6e6" text-anchor="middle" font-family="Liberation Serif" stroke="#e6e6e6" stroke-width="0.2">0</text>
<text x="890.38" y="164.48" font-size="10" fill="#e6e6e6" text-anchor="middle" font-family="Liberation Serif" stroke="#e6e6e6" stroke-width="0.2">1</text>
<text x="889.22" y="149.77" font-size="10" fill="#e6e6e6" text-anchor="middle" font-family="Liberation Serif" stroke="#e6e6e6" stroke-width="0.2">2</text>
<text x="893.41" y="135.61" font-size="10" fill="#e6e6e6" text-anchor="middle" font-family="Liberation Serif" stroke="#e6e6e6" stroke-width="0.2">3</text>
<text x="902.4" y="123.9" font-size="10" fill="#e6e6e6" text-anchor="middle" font-family="Liberation Serif" stroke="#e6e6e6" stroke-width="0.2">4</text>
<text x="914.99" y="116.19" font-size="10" fill="#e6e6e6" text-anchor="middle" font-family="Liberation Serif" stroke="#e6e6e6" stroke-width="0.2">5</text>
<text x="929.5" y="113.5" font-size="10" fill="#e6e6e6" text-anchor="middle" font-family="Liberation Serif" stroke="#e6e6e6" stroke-width="0.2">6</text>
<text x="944.01" y="116.19" font-size="10" fill="#e6e6e6" text-anchor="middle" font-family="Liberation Serif" stroke="#e6e6e6" stroke-width="0.2">7</text>
<text x="956.6" y="123.9" font-size="10" fill="#e6e6e6" text-anchor="middle" font-family="Liberation Serif" stroke="#e6e6e6" stroke-width="0.2">8</text>
<text x="965.59" y="135.61" font-size="10" fill="#e6e6e6" text-anchor="middle" font-family="Liberation Serif" stroke="#e6e6e6" stroke-width="0.2">9</text>
<text x="967.29" y="150.03" font-size="10" fill="#e6e6e6" text-anchor="middle" font-family="Liberation Serif" stroke="#e6e6e6" stroke-width="0.2">10</text>
<text x="966.21" y="163.84" font-size="10" fill="#e6e6e6" text-anchor="middle" font-family="Liberation Serif" stroke="#e6e6e6" stroke-width="0.2">11</text>
<text x="960.24" y="176.34" font-size="10" fill="#e6e6e6" text-anchor="middle" font-family="Liberation Serif" stroke="#e6e6e6" stroke-width="0.2">12</text>
<line x1="936.28" y1="146.26" x2="882.01" y2="180.18" stroke="#fff" stroke-width="2" stroke-linecap="round"/>
<circle cx="929.5" cy="150.5" r="8" fill="#e9e4e4" stroke="#b84848" stroke-width="1"/>
<circle cx="929.5" cy="150.5" r="3.6" fill="#cfcaca"/>
<text x="910" y="189.0" font-size="14" fill="#efe22a" textLength="18" lengthAdjust="spacingAndGlyphs" stroke="#efe22a" stroke-width="0.3">0R</text>
<text x="889" y="199.5" font-size="12.5" fill="#ffffff" textLength="87" lengthAdjust="spacingAndGlyphs" stroke="#ffffff" stroke-width="0.3">Speed x1000RPM</text>
<rect x="826.5" y="73.5" width="34" height="45.5" fill="#fff" stroke="#cfcfcf" stroke-width="1"/>
<text x="843.5" y="96" font-size="18" fill="#1f9f3d" font-weight="bold" text-anchor="middle" textLength="28" lengthAdjust="spacingAndGlyphs" stroke="#1f9f3d" stroke-width="0.15">XH</text>
<circle cx="843" cy="160.5" r="12" fill="none" stroke="#b0683a" stroke-width="3"/>
<text x="843.5" y="166.8" font-size="17" fill="#b0683a" font-weight="bold" text-anchor="middle" stroke="#b0683a" stroke-width="0.15">P</text>
<circle cx="844" cy="214" r="16" fill="#fafafa" stroke="#cfcfcf" stroke-width="1.2"/>
<text x="844" y="221.5" font-size="19" fill="#a6a6a6" text-anchor="middle" stroke="#a6a6a6" stroke-width="0.25">停</text>
<circle cx="739" cy="303" r="50.5" fill="#ebebeb" stroke="#d2d2d2" stroke-width="1"/>
<circle cx="739" cy="303" r="46.2" fill="#000" stroke="#c8c8c8" stroke-width="0.8"/>
<clipPath id="bclip"><circle cx="739" cy="303" r="45.5"/></clipPath>
<g clip-path="url(#bclip)">
<rect x="693" y="257" width="92" height="92" fill="#3b3b3b"/>
<path d="M689,304 Q739,286 789,304 L789,353 L689,353Z" fill="#000"/>
<path d="M696.50,320.60 A46,46 0 0 1 693.00,303.00 L702.50,303.00 A36.5,36.5 0 0 0 705.28,316.97Z" fill="#ff1a1a"/>
<path d="M693.00,303.00 A46,46 0 0 1 696.50,285.40 L705.28,289.03 A36.5,36.5 0 0 0 702.50,303.00Z" fill="#f27d7d"/>
<path d="M696.50,285.40 A46,46 0 0 1 706.47,270.47 L713.19,277.19 A36.5,36.5 0 0 0 705.28,289.03Z" fill="#f3b3b3"/>
<path d="M706.47,270.47 A46,46 0 0 1 721.40,260.50 L725.03,269.28 A36.5,36.5 0 0 0 713.19,277.19Z" fill="#c7dcc7"/>
<path d="M721.40,260.50 A46,46 0 0 1 739.00,257.00 L739.00,266.50 A36.5,36.5 0 0 0 725.03,269.28Z" fill="#a6d9a6"/>
<path d="M739.00,257.00 A46,46 0 0 1 756.60,260.50 L752.97,269.28 A36.5,36.5 0 0 0 739.00,266.50Z" fill="#8ed28e"/>
<path d="M756.60,260.50 A46,46 0 0 1 771.53,270.47 L764.81,277.19 A36.5,36.5 0 0 0 752.97,269.28Z" fill="#5fcf5f"/>
<path d="M771.53,270.47 A46,46 0 0 1 781.50,285.40 L772.72,289.03 A36.5,36.5 0 0 0 764.81,277.19Z" fill="#3fdd3f"/>
<path d="M781.50,285.40 A46,46 0 0 1 785.00,303.00 L775.50,303.00 A36.5,36.5 0 0 0 772.72,289.03Z" fill="#28e828"/>
<path d="M785.00,303.00 A46,46 0 0 1 781.50,320.60 L772.72,316.97 A36.5,36.5 0 0 0 775.50,303.00Z" fill="#19f019"/>
<line x1="705.74" y1="316.78" x2="696.50" y2="320.60" stroke="#ffffff" stroke-width="1.3"/>
<line x1="703.00" y1="303.00" x2="693.00" y2="303.00" stroke="#ffffff" stroke-width="1.3"/>
<line x1="705.74" y1="289.22" x2="696.50" y2="285.40" stroke="#ffffff" stroke-width="1.3"/>
<line x1="713.54" y1="277.54" x2="706.47" y2="270.47" stroke="#ffffff" stroke-width="1.3"/>
<line x1="725.22" y1="269.74" x2="721.40" y2="260.50" stroke="#ffffff" stroke-width="1.3"/>
<line x1="739.00" y1="267.00" x2="739.00" y2="257.00" stroke="#ffffff" stroke-width="1.3"/>
<line x1="752.78" y1="269.74" x2="756.60" y2="260.50" stroke="#ffffff" stroke-width="1.3"/>
<line x1="764.46" y1="277.54" x2="771.53" y2="270.47" stroke="#ffffff" stroke-width="1.3"/>
<line x1="772.26" y1="289.22" x2="781.50" y2="285.40" stroke="#ffffff" stroke-width="1.3"/>
<line x1="775.00" y1="303.00" x2="785.00" y2="303.00" stroke="#ffffff" stroke-width="1.3"/>
<line x1="772.26" y1="316.78" x2="781.50" y2="320.60" stroke="#ffffff" stroke-width="1.3"/>
</g>
<text x="710.82" y="317.67" font-size="8" fill="#d4d4d4" text-anchor="middle" font-family="Liberation Serif" stroke="#d4d4d4" stroke-width="0.2">0</text>
<text x="709.5" y="306.0" font-size="8" fill="#d4d4d4" text-anchor="middle" font-family="Liberation Serif" stroke="#d4d4d4" stroke-width="0.2">10</text>
<text x="711.75" y="294.71" font-size="8" fill="#d4d4d4" text-anchor="middle" font-family="Liberation Serif" stroke="#d4d4d4" stroke-width="0.2">20</text>
<text x="718.14" y="285.14" font-size="8" fill="#d4d4d4" text-anchor="middle" font-family="Liberation Serif" stroke="#d4d4d4" stroke-width="0.2">30</text>
<text x="727.71" y="278.75" font-size="8" fill="#d4d4d4" text-anchor="middle" font-family="Liberation Serif" stroke="#d4d4d4" stroke-width="0.2">40</text>
<text x="739.0" y="276.5" font-size="8" fill="#d4d4d4" text-anchor="middle" font-family="Liberation Serif" stroke="#d4d4d4" stroke-width="0.2">50</text>
<text x="750.29" y="278.75" font-size="8" fill="#d4d4d4" text-anchor="middle" font-family="Liberation Serif" stroke="#d4d4d4" stroke-width="0.2">60</text>
<text x="759.86" y="285.14" font-size="8" fill="#d4d4d4" text-anchor="middle" font-family="Liberation Serif" stroke="#d4d4d4" stroke-width="0.2">70</text>
<text x="766.25" y="294.71" font-size="8" fill="#d4d4d4" text-anchor="middle" font-family="Liberation Serif" stroke="#d4d4d4" stroke-width="0.2">80</text>
<text x="768.5" y="306.0" font-size="8" fill="#d4d4d4" text-anchor="middle" font-family="Liberation Serif" stroke="#d4d4d4" stroke-width="0.2">90</text>
<text x="767.18" y="317.67" font-size="8" fill="#d4d4d4" text-anchor="middle" font-family="Liberation Serif" stroke="#d4d4d4" stroke-width="0.2">100</text>
<line x1="745" y1="300.5" x2="699" y2="320.5" stroke="#fff" stroke-width="1.8"/>
<text x="731" y="326.5" font-size="12.5" fill="#e8d84a" stroke="#e8d84a" stroke-width="0.3">0</text>
<text x="718.5" y="334.5" font-size="10.5" fill="#f2f2f2" textLength="50" lengthAdjust="spacingAndGlyphs" stroke="#f2f2f2" stroke-width="0.3">Batt Capacity</text>
<circle cx="843.5" cy="302" r="51" fill="url(#tring)"/>
<circle cx="843.5" cy="302" r="47" fill="#c8cccc"/>
<circle cx="843.5" cy="302" r="45.5" fill="url(#tface)"/>
<path d="M799.5,302 Q843.5,288 887.5,302" fill="none" stroke="#2c3c3c" stroke-width="0.6"/>
<path d="M882.70,282.02 A44,44 0 0 1 887.44,299.70 L881.95,299.99 A38.5,38.5 0 0 0 877.80,284.52Z" fill="#3c3434"/>
<path d="M887.36,298.55 A44,44 0 0 1 865.50,340.11 L862.75,335.34 A38.5,38.5 0 0 0 881.88,298.98Z" fill="url(#red)"/>
<line x1="821.50" y1="340.11" x2="825.00" y2="334.04" stroke="#fff" stroke-width="2.2"/>
<line x1="816.71" y1="336.91" x2="818.85" y2="334.13" stroke="#8a9a9a" stroke-width="0.9"/>
<line x1="812.39" y1="333.11" x2="814.86" y2="330.64" stroke="#8a9a9a" stroke-width="0.9"/>
<line x1="808.59" y1="328.79" x2="811.37" y2="326.65" stroke="#8a9a9a" stroke-width="0.9"/>
<line x1="805.39" y1="324.00" x2="811.46" y2="320.50" stroke="#fff" stroke-width="2.2"/>
<line x1="802.85" y1="318.84" x2="806.08" y2="317.50" stroke="#8a9a9a" stroke-width="0.9"/>
<line x1="801.00" y1="313.39" x2="804.38" y2="312.48" stroke="#8a9a9a" stroke-width="0.9"/>
<line x1="799.88" y1="307.74" x2="803.35" y2="307.29" stroke="#8a9a9a" stroke-width="0.9"/>
<line x1="799.50" y1="302.00" x2="806.50" y2="302.00" stroke="#fff" stroke-width="2.2"/>
<line x1="799.88" y1="296.26" x2="803.35" y2="296.71" stroke="#8a9a9a" stroke-width="0.9"/>
<line x1="801.00" y1="290.61" x2="804.38" y2="291.52" stroke="#8a9a9a" stroke-width="0.9"/>
<line x1="802.85" y1="285.16" x2="806.08" y2="286.50" stroke="#8a9a9a" stroke-width="0.9"/>
<line x1="805.39" y1="280.00" x2="811.46" y2="283.50" stroke="#fff" stroke-width="2.2"/>
<line x1="808.59" y1="275.21" x2="811.37" y2="277.35" stroke="#8a9a9a" stroke-width="0.9"/>
<line x1="812.39" y1="270.89" x2="814.86" y2="273.36" stroke="#8a9a9a" stroke-width="0.9"/>
<line x1="816.71" y1="267.09" x2="818.85" y2="269.87" stroke="#8a9a9a" stroke-width="0.9"/>
<line x1="821.50" y1="263.89" x2="825.00" y2="269.96" stroke="#fff" stroke-width="2.2"/>
<line x1="826.66" y1="261.35" x2="828.00" y2="264.58" stroke="#8a9a9a" stroke-width="0.9"/>
<line x1="832.11" y1="259.50" x2="833.02" y2="262.88" stroke="#8a9a9a" stroke-width="0.9"/>
<line x1="837.76" y1="258.38" x2="838.21" y2="261.85" stroke="#8a9a9a" stroke-width="0.9"/>
<line x1="843.50" y1="258.00" x2="843.50" y2="265.00" stroke="#fff" stroke-width="2.2"/>
<line x1="849.24" y1="258.38" x2="848.79" y2="261.85" stroke="#8a9a9a" stroke-width="0.9"/>
<line x1="854.89" y1="259.50" x2="853.98" y2="262.88" stroke="#8a9a9a" stroke-width="0.9"/>
<line x1="860.34" y1="261.35" x2="859.00" y2="264.58" stroke="#8a9a9a" stroke-width="0.9"/>
<line x1="865.50" y1="263.89" x2="862.00" y2="269.96" stroke="#fff" stroke-width="2.2"/>
<line x1="870.29" y1="267.09" x2="868.15" y2="269.87" stroke="#8a9a9a" stroke-width="0.9"/>
<line x1="874.61" y1="270.89" x2="872.14" y2="273.36" stroke="#8a9a9a" stroke-width="0.9"/>
<line x1="878.41" y1="275.21" x2="875.63" y2="277.35" stroke="#8a9a9a" stroke-width="0.9"/>
<line x1="881.61" y1="280.00" x2="875.54" y2="283.50" stroke="#fff" stroke-width="2.2"/>
<line x1="884.15" y1="285.16" x2="880.92" y2="286.50" stroke="#8a9a9a" stroke-width="0.9"/>
<line x1="886.00" y1="290.61" x2="882.62" y2="291.52" stroke="#8a9a9a" stroke-width="0.9"/>
<line x1="887.12" y1="296.26" x2="883.65" y2="296.71" stroke="#8a9a9a" stroke-width="0.9"/>
<line x1="887.50" y1="302.00" x2="880.50" y2="302.00" stroke="#fff" stroke-width="2.2"/>
<line x1="887.12" y1="307.74" x2="883.65" y2="307.29" stroke="#8a9a9a" stroke-width="0.9"/>
<line x1="886.00" y1="313.39" x2="882.62" y2="312.48" stroke="#8a9a9a" stroke-width="0.9"/>
<line x1="884.15" y1="318.84" x2="880.92" y2="317.50" stroke="#8a9a9a" stroke-width="0.9"/>
<line x1="881.61" y1="324.00" x2="875.54" y2="320.50" stroke="#fff" stroke-width="2.2"/>
<line x1="878.41" y1="328.79" x2="875.63" y2="326.65" stroke="#8a9a9a" stroke-width="0.9"/>
<line x1="874.61" y1="333.11" x2="872.14" y2="330.64" stroke="#8a9a9a" stroke-width="0.9"/>
<line x1="870.29" y1="336.91" x2="868.15" y2="334.13" stroke="#8a9a9a" stroke-width="0.9"/>
<line x1="865.50" y1="340.11" x2="862.00" y2="334.04" stroke="#fff" stroke-width="2.2"/>
<text x="828.5" y="330.78" font-size="7.5" fill="#e4e4e4" text-anchor="middle" font-family="Liberation Serif" stroke="#e4e4e4" stroke-width="0.15">-40</text>
<text x="817.52" y="319.8" font-size="7.5" fill="#e4e4e4" text-anchor="middle" font-family="Liberation Serif" stroke="#e4e4e4" stroke-width="0.15">-20</text>
<text x="817.52" y="289.8" font-size="7.5" fill="#e4e4e4" text-anchor="middle" font-family="Liberation Serif" stroke="#e4e4e4" stroke-width="0.15">20</text>
<text x="828.5" y="278.82" font-size="7.5" fill="#e4e4e4" text-anchor="middle" font-family="Liberation Serif" stroke="#e4e4e4" stroke-width="0.15">40</text>
<text x="843.5" y="274.8" font-size="7.5" fill="#e4e4e4" text-anchor="middle" font-family="Liberation Serif" stroke="#e4e4e4" stroke-width="0.15">60</text>
<text x="858.5" y="278.82" font-size="7.5" fill="#e4e4e4" text-anchor="middle" font-family="Liberation Serif" stroke="#e4e4e4" stroke-width="0.15">80</text>
<text x="869.48" y="289.8" font-size="7.5" fill="#e4e4e4" text-anchor="middle" font-family="Liberation Serif" stroke="#e4e4e4" stroke-width="0.15">100</text>
<text x="873.5" y="304.8" font-size="7.5" fill="#e4e4e4" text-anchor="middle" font-family="Liberation Serif" stroke="#e4e4e4" stroke-width="0.15">120</text>
<text x="869.48" y="319.8" font-size="7.5" fill="#e4e4e4" text-anchor="middle" font-family="Liberation Serif" stroke="#e4e4e4" stroke-width="0.15">140</text>
<text x="858.5" y="330.78" font-size="7.5" fill="#e4e4e4" text-anchor="middle" font-family="Liberation Serif" stroke="#e4e4e4" stroke-width="0.15">160</text>
<circle cx="812.5" cy="302.0" r="2.2" fill="none" stroke="#ddd" stroke-width="0.8"/>
<circle cx="843.5" cy="302" r="6.5" fill="#0b0f0f" stroke="#243030" stroke-width="1"/>
<line x1="849.5" y1="302" x2="800.5" y2="302" stroke="#fff" stroke-width="1.7"/>
<text x="832.5" y="333.5" font-size="12.5" fill="#e6e040" stroke="#e6e040" stroke-width="0.3">0°</text>
<text x="812" y="340" font-size="10.5" fill="#f4f4f4" textLength="65" lengthAdjust="spacingAndGlyphs" stroke="#f4f4f4" stroke-width="0.3">MOS Temprature</text>
<circle cx="948" cy="302" r="51" fill="url(#tring)"/>
<circle cx="948" cy="302" r="47" fill="#c8cccc"/>
<circle cx="948" cy="302" r="45.5" fill="url(#tface)"/>
<path d="M904,302 Q948,288 992,302" fill="none" stroke="#2c3c3c" stroke-width="0.6"/>
<path d="M987.20,282.02 A44,44 0 0 1 991.94,299.70 L986.45,299.99 A38.5,38.5 0 0 0 982.30,284.52Z" fill="#3c3434"/>
<path d="M991.86,298.55 A44,44 0 0 1 970.00,340.11 L967.25,335.34 A38.5,38.5 0 0 0 986.38,298.98Z" fill="url(#red)"/>
<line x1="926.00" y1="340.11" x2="929.50" y2="334.04" stroke="#fff" stroke-width="2.2"/>
<line x1="921.21" y1="336.91" x2="923.35" y2="334.13" stroke="#8a9a9a" stroke-width="0.9"/>
<line x1="916.89" y1="333.11" x2="919.36" y2="330.64" stroke="#8a9a9a" stroke-width="0.9"/>
<line x1="913.09" y1="328.79" x2="915.87" y2="326.65" stroke="#8a9a9a" stroke-width="0.9"/>
<line x1="909.89" y1="324.00" x2="915.96" y2="320.50" stroke="#fff" stroke-width="2.2"/>
<line x1="907.35" y1="318.84" x2="910.58" y2="317.50" stroke="#8a9a9a" stroke-width="0.9"/>
<line x1="905.50" y1="313.39" x2="908.88" y2="312.48" stroke="#8a9a9a" stroke-width="0.9"/>
<line x1="904.38" y1="307.74" x2="907.85" y2="307.29" stroke="#8a9a9a" stroke-width="0.9"/>
<line x1="904.00" y1="302.00" x2="911.00" y2="302.00" stroke="#fff" stroke-width="2.2"/>
<line x1="904.38" y1="296.26" x2="907.85" y2="296.71" stroke="#8a9a9a" stroke-width="0.9"/>
<line x1="905.50" y1="290.61" x2="908.88" y2="291.52" stroke="#8a9a9a" stroke-width="0.9"/>
<line x1="907.35" y1="285.16" x2="910.58" y2="286.50" stroke="#8a9a9a" stroke-width="0.9"/>
<line x1="909.89" y1="280.00" x2="915.96" y2="283.50" stroke="#fff" stroke-width="2.2"/>
<line x1="913.09" y1="275.21" x2="915.87" y2="277.35" stroke="#8a9a9a" stroke-width="0.9"/>
<line x1="916.89" y1="270.89" x2="919.36" y2="273.36" stroke="#8a9a9a" stroke-width="0.9"/>
<line x1="921.21" y1="267.09" x2="923.35" y2="269.87" stroke="#8a9a9a" stroke-width="0.9"/>
<line x1="926.00" y1="263.89" x2="929.50" y2="269.96" stroke="#fff" stroke-width="2.2"/>
<line x1="931.16" y1="261.35" x2="932.50" y2="264.58" stroke="#8a9a9a" stroke-width="0.9"/>
<line x1="936.61" y1="259.50" x2="937.52" y2="262.88" stroke="#8a9a9a" stroke-width="0.9"/>
<line x1="942.26" y1="258.38" x2="942.71" y2="261.85" stroke="#8a9a9a" stroke-width="0.9"/>
<line x1="948.00" y1="258.00" x2="948.00" y2="265.00" stroke="#fff" stroke-width="2.2"/>
<line x1="953.74" y1="258.38" x2="953.29" y2="261.85" stroke="#8a9a9a" stroke-width="0.9"/>
<line x1="959.39" y1="259.50" x2="958.48" y2="262.88" stroke="#8a9a9a" stroke-width="0.9"/>
<line x1="964.84" y1="261.35" x2="963.50" y2="264.58" stroke="#8a9a9a" stroke-width="0.9"/>
<line x1="970.00" y1="263.89" x2="966.50" y2="269.96" stroke="#fff" stroke-width="2.2"/>
<line x1="974.79" y1="267.09" x2="972.65" y2="269.87" stroke="#8a9a9a" stroke-width="0.9"/>
<line x1="979.11" y1="270.89" x2="976.64" y2="273.36" stroke="#8a9a9a" stroke-width="0.9"/>
<line x1="982.91" y1="275.21" x2="980.13" y2="277.35" stroke="#8a9a9a" stroke-width="0.9"/>
<line x1="986.11" y1="280.00" x2="980.04" y2="283.50" stroke="#fff" stroke-width="2.2"/>
<line x1="988.65" y1="285.16" x2="985.42" y2="286.50" stroke="#8a9a9a" stroke-width="0.9"/>
<line x1="990.50" y1="290.61" x2="987.12" y2="291.52" stroke="#8a9a9a" stroke-width="0.9"/>
<line x1="991.62" y1="296.26" x2="988.15" y2="296.71" stroke="#8a9a9a" stroke-width="0.9"/>
<line x1="992.00" y1="302.00" x2="985.00" y2="302.00" stroke="#fff" stroke-width="2.2"/>
<line x1="991.62" y1="307.74" x2="988.15" y2="307.29" stroke="#8a9a9a" stroke-width="0.9"/>
<line x1="990.50" y1="313.39" x2="987.12" y2="312.48" stroke="#8a9a9a" stroke-width="0.9"/>
<line x1="988.65" y1="318.84" x2="985.42" y2="317.50" stroke="#8a9a9a" stroke-width="0.9"/>
<line x1="986.11" y1="324.00" x2="980.04" y2="320.50" stroke="#fff" stroke-width="2.2"/>
<line x1="982.91" y1="328.79" x2="980.13" y2="326.65" stroke="#8a9a9a" stroke-width="0.9"/>
<line x1="979.11" y1="333.11" x2="976.64" y2="330.64" stroke="#8a9a9a" stroke-width="0.9"/>
<line x1="974.79" y1="336.91" x2="972.65" y2="334.13" stroke="#8a9a9a" stroke-width="0.9"/>
<line x1="970.00" y1="340.11" x2="966.50" y2="334.04" stroke="#fff" stroke-width="2.2"/>
<text x="933.0" y="330.78" font-size="7.5" fill="#e4e4e4" text-anchor="middle" font-family="Liberation Serif" stroke="#e4e4e4" stroke-width="0.15">-40</text>
<text x="922.02" y="319.8" font-size="7.5" fill="#e4e4e4" text-anchor="middle" font-family="Liberation Serif" stroke="#e4e4e4" stroke-width="0.15">-20</text>
<text x="922.02" y="289.8" font-size="7.5" fill="#e4e4e4" text-anchor="middle" font-family="Liberation Serif" stroke="#e4e4e4" stroke-width="0.15">20</text>
<text x="933.0" y="278.82" font-size="7.5" fill="#e4e4e4" text-anchor="middle" font-family="Liberation Serif" stroke="#e4e4e4" stroke-width="0.15">40</text>
<text x="948.0" y="274.8" font-size="7.5" fill="#e4e4e4" text-anchor="middle" font-family="Liberation Serif" stroke="#e4e4e4" stroke-width="0.15">60</text>
<text x="963.0" y="278.82" font-size="7.5" fill="#e4e4e4" text-anchor="middle" font-family="Liberation Serif" stroke="#e4e4e4" stroke-width="0.15">80</text>
<text x="973.98" y="289.8" font-size="7.5" fill="#e4e4e4" text-anchor="middle" font-family="Liberation Serif" stroke="#e4e4e4" stroke-width="0.15">100</text>
<text x="978.0" y="304.8" font-size="7.5" fill="#e4e4e4" text-anchor="middle" font-family="Liberation Serif" stroke="#e4e4e4" stroke-width="0.15">120</text>
<text x="973.98" y="319.8" font-size="7.5" fill="#e4e4e4" text-anchor="middle" font-family="Liberation Serif" stroke="#e4e4e4" stroke-width="0.15">140</text>
<text x="963.0" y="330.78" font-size="7.5" fill="#e4e4e4" text-anchor="middle" font-family="Liberation Serif" stroke="#e4e4e4" stroke-width="0.15">160</text>
<circle cx="917.0" cy="302.0" r="2.2" fill="none" stroke="#ddd" stroke-width="0.8"/>
<circle cx="948" cy="302" r="6.5" fill="#0b0f0f" stroke="#243030" stroke-width="1"/>
<line x1="954" y1="302" x2="905" y2="302" stroke="#fff" stroke-width="1.7"/>
<text x="937" y="333.5" font-size="12.5" fill="#e6e040" stroke="#e6e040" stroke-width="0.3">0°</text>
<text x="917" y="340" font-size="10.5" fill="#f4f4f4" textLength="70" lengthAdjust="spacingAndGlyphs" stroke="#f4f4f4" stroke-width="0.3">Motor Temprature</text>
<text x="752.5" y="383" font-size="12" fill="#25255f" text-anchor="middle" textLength="82" lengthAdjust="spacingAndGlyphs" stroke="#25255f" stroke-width="0.3">Voltage:000.0V</text>
<text x="818" y="376" font-size="12" fill="#25255f" textLength="44" lengthAdjust="spacingAndGlyphs" stroke="#25255f" stroke-width="0.3">AutoLear</text>
<text x="818" y="392" font-size="12" fill="#25255f" textLength="8" lengthAdjust="spacingAndGlyphs" stroke="#25255f" stroke-width="0.3">n</text>
<text x="934.5" y="383" font-size="12" fill="#25255f" text-anchor="middle" textLength="53" lengthAdjust="spacingAndGlyphs" stroke="#25255f" stroke-width="0.3">Motor Off</text>
<clipPath id="clc"><rect x="692.5" y="393.2" width="120" height="60.400000000000034"/></clipPath>
<g clip-path="url(#clc)">
<circle cx="752.5" cy="430.5" r="52" fill="url(#sring)" stroke="#b8b8b8" stroke-width="0.9"/>
<circle cx="752.5" cy="430.5" r="48.5" fill="url(#sring2)"/>
<circle cx="752.5" cy="430.5" r="46" fill="url(#face)" stroke="#444" stroke-width="0.8"/>
<circle cx="752.5" cy="430.5" r="42.5" fill="none" stroke="#777" stroke-width="0.5" stroke-dasharray="1.2,1.2"/>
<line x1="719.43" y1="460.28" x2="726.12" y2="454.25" stroke="#f0f0f0" stroke-width="1.6"/>
<line x1="714.36" y1="453.42" x2="718.64" y2="450.84" stroke="#d8d8d8" stroke-width="1.1"/>
<line x1="710.68" y1="445.72" x2="719.14" y2="442.64" stroke="#f0f0f0" stroke-width="1.6"/>
<line x1="708.55" y1="437.46" x2="713.49" y2="436.68" stroke="#d8d8d8" stroke-width="1.1"/>
<line x1="708.03" y1="428.95" x2="717.02" y2="429.26" stroke="#f0f0f0" stroke-width="1.6"/>
<line x1="709.14" y1="420.49" x2="714.01" y2="421.61" stroke="#d8d8d8" stroke-width="1.1"/>
<line x1="711.85" y1="412.40" x2="720.07" y2="416.06" stroke="#f0f0f0" stroke-width="1.6"/>
<line x1="716.05" y1="404.98" x2="720.14" y2="407.84" stroke="#d8d8d8" stroke-width="1.1"/>
<line x1="721.59" y1="398.49" x2="727.84" y2="404.96" stroke="#f0f0f0" stroke-width="1.6"/>
<line x1="728.26" y1="393.18" x2="730.99" y2="397.37" stroke="#d8d8d8" stroke-width="1.1"/>
<line x1="735.83" y1="389.24" x2="739.20" y2="397.58" stroke="#f0f0f0" stroke-width="1.6"/>
<line x1="744.01" y1="386.82" x2="744.96" y2="391.73" stroke="#d8d8d8" stroke-width="1.1"/>
<line x1="752.50" y1="386.00" x2="752.50" y2="395.00" stroke="#f0f0f0" stroke-width="1.6"/>
<line x1="760.99" y1="386.82" x2="760.04" y2="391.73" stroke="#d8d8d8" stroke-width="1.1"/>
<line x1="769.17" y1="389.24" x2="765.80" y2="397.58" stroke="#f0f0f0" stroke-width="1.6"/>
<line x1="776.74" y1="393.18" x2="774.01" y2="397.37" stroke="#d8d8d8" stroke-width="1.1"/>
<line x1="783.41" y1="398.49" x2="777.16" y2="404.96" stroke="#f0f0f0" stroke-width="1.6"/>
<line x1="788.95" y1="404.98" x2="784.86" y2="407.84" stroke="#d8d8d8" stroke-width="1.1"/>
<line x1="793.15" y1="412.40" x2="784.93" y2="416.06" stroke="#f0f0f0" stroke-width="1.6"/>
<line x1="795.86" y1="420.49" x2="790.99" y2="421.61" stroke="#d8d8d8" stroke-width="1.1"/>
<line x1="796.97" y1="428.95" x2="787.98" y2="429.26" stroke="#f0f0f0" stroke-width="1.6"/>
<line x1="796.45" y1="437.46" x2="791.51" y2="436.68" stroke="#d8d8d8" stroke-width="1.1"/>
<line x1="794.32" y1="445.72" x2="785.86" y2="442.64" stroke="#f0f0f0" stroke-width="1.6"/>
<line x1="790.64" y1="453.42" x2="786.36" y2="450.84" stroke="#d8d8d8" stroke-width="1.1"/>
<line x1="785.57" y1="460.28" x2="778.88" y2="454.25" stroke="#f0f0f0" stroke-width="1.6"/>
<text x="730.58" y="453.24" font-size="8.5" fill="#e6e6e6" text-anchor="middle" font-family="Liberation Serif" stroke="#e6e6e6" stroke-width="0.35">-240</text>
<text x="724.78" y="443.59" font-size="8.5" fill="#e6e6e6" text-anchor="middle" font-family="Liberation Serif" stroke="#e6e6e6" stroke-width="0.35">-200</text>
<text x="723.02" y="432.47" font-size="8.5" fill="#e6e6e6" text-anchor="middle" font-family="Liberation Serif" stroke="#e6e6e6" stroke-width="0.35">-160</text>
<text x="725.55" y="421.5" font-size="8.5" fill="#e6e6e6" text-anchor="middle" font-family="Liberation Serif" stroke="#e6e6e6" stroke-width="0.35">-120</text>
<text x="732.01" y="412.28" font-size="8.5" fill="#e6e6e6" text-anchor="middle" font-family="Liberation Serif" stroke="#e6e6e6" stroke-width="0.35">-80</text>
<text x="741.45" y="406.15" font-size="8.5" fill="#e6e6e6" text-anchor="middle" font-family="Liberation Serif" stroke="#e6e6e6" stroke-width="0.35">-40</text>
<text x="752.5" y="404.0" font-size="8.5" fill="#e6e6e6" text-anchor="middle" font-family="Liberation Serif" stroke="#e6e6e6" stroke-width="0.35">0</text>
<text x="763.55" y="406.15" font-size="8.5" fill="#e6e6e6" text-anchor="middle" font-family="Liberation Serif" stroke="#e6e6e6" stroke-width="0.35">40</text>
<text x="772.99" y="412.28" font-size="8.5" fill="#e6e6e6" text-anchor="middle" font-family="Liberation Serif" stroke="#e6e6e6" stroke-width="0.35">80</text>
<text x="779.45" y="421.5" font-size="8.5" fill="#e6e6e6" text-anchor="middle" font-family="Liberation Serif" stroke="#e6e6e6" stroke-width="0.35">120</text>
<text x="781.98" y="432.47" font-size="8.5" fill="#e6e6e6" text-anchor="middle" font-family="Liberation Serif" stroke="#e6e6e6" stroke-width="0.35">160</text>
<text x="780.22" y="443.59" font-size="8.5" fill="#e6e6e6" text-anchor="middle" font-family="Liberation Serif" stroke="#e6e6e6" stroke-width="0.35">200</text>
<text x="774.42" y="453.24" font-size="8.5" fill="#e6e6e6" text-anchor="middle" font-family="Liberation Serif" stroke="#e6e6e6" stroke-width="0.35">240</text>
<line x1="752.50" y1="430.50" x2="752.50" y2="382.50" stroke="#fff" stroke-width="1.8" stroke-linecap="round"/>
<circle cx="752.5" cy="430.5" r="6" fill="#e9e4e4" stroke="#b84848" stroke-width="1"/>
<circle cx="752.5" cy="430.5" r="2.7" fill="#cfcaca"/>
</g>
<clipPath id="cth"><rect x="875" y="393.2" width="120" height="60.400000000000034"/></clipPath>
<g clip-path="url(#cth)">
<circle cx="935" cy="429.5" r="52" fill="url(#sring)" stroke="#b8b8b8" stroke-width="0.9"/>
<circle cx="935" cy="429.5" r="48.5" fill="url(#sring2)"/>
<circle cx="935" cy="429.5" r="46" fill="url(#face)" stroke="#444" stroke-width="0.8"/>
<circle cx="935" cy="429.5" r="42.5" fill="none" stroke="#777" stroke-width="0.5" stroke-dasharray="1.2,1.2"/>
<line x1="898.55" y1="455.02" x2="905.92" y2="449.86" stroke="#f0f0f0" stroke-width="1.6"/>
<line x1="893.02" y1="444.26" x2="897.74" y2="442.60" stroke="#d8d8d8" stroke-width="1.1"/>
<line x1="890.60" y1="432.41" x2="899.58" y2="431.82" stroke="#f0f0f0" stroke-width="1.6"/>
<line x1="891.45" y1="420.34" x2="896.35" y2="421.37" stroke="#d8d8d8" stroke-width="1.1"/>
<line x1="895.53" y1="408.95" x2="903.51" y2="413.11" stroke="#f0f0f0" stroke-width="1.6"/>
<line x1="902.52" y1="399.08" x2="906.17" y2="402.50" stroke="#d8d8d8" stroke-width="1.1"/>
<line x1="911.91" y1="391.46" x2="916.58" y2="399.15" stroke="#f0f0f0" stroke-width="1.6"/>
<line x1="923.01" y1="386.64" x2="924.36" y2="391.46" stroke="#d8d8d8" stroke-width="1.1"/>
<line x1="935.00" y1="385.00" x2="935.00" y2="394.00" stroke="#f0f0f0" stroke-width="1.6"/>
<line x1="946.99" y1="386.64" x2="945.64" y2="391.46" stroke="#d8d8d8" stroke-width="1.1"/>
<line x1="958.09" y1="391.46" x2="953.42" y2="399.15" stroke="#f0f0f0" stroke-width="1.6"/>
<line x1="967.48" y1="399.08" x2="963.83" y2="402.50" stroke="#d8d8d8" stroke-width="1.1"/>
<line x1="974.47" y1="408.95" x2="966.49" y2="413.11" stroke="#f0f0f0" stroke-width="1.6"/>
<line x1="978.55" y1="420.34" x2="973.65" y2="421.37" stroke="#d8d8d8" stroke-width="1.1"/>
<line x1="979.40" y1="432.41" x2="970.42" y2="431.82" stroke="#f0f0f0" stroke-width="1.6"/>
<line x1="976.98" y1="444.26" x2="972.26" y2="442.60" stroke="#d8d8d8" stroke-width="1.1"/>
<line x1="971.45" y1="455.02" x2="964.08" y2="449.86" stroke="#f0f0f0" stroke-width="1.6"/>
<text x="910.84" y="449.42" font-size="8.5" fill="#e6e6e6" text-anchor="middle" font-family="Liberation Serif" stroke="#e6e6e6" stroke-width="0.35">0</text>
<text x="905.56" y="434.43" font-size="8.5" fill="#e6e6e6" text-anchor="middle" font-family="Liberation Serif" stroke="#e6e6e6" stroke-width="0.35">32</text>
<text x="908.83" y="418.88" font-size="8.5" fill="#e6e6e6" text-anchor="middle" font-family="Liberation Serif" stroke="#e6e6e6" stroke-width="0.35">64</text>
<text x="919.7" y="407.28" font-size="8.5" fill="#e6e6e6" text-anchor="middle" font-family="Liberation Serif" stroke="#e6e6e6" stroke-width="0.35">96</text>
<text x="935.0" y="403.0" font-size="8.5" fill="#e6e6e6" text-anchor="middle" font-family="Liberation Serif" stroke="#e6e6e6" stroke-width="0.35">128</text>
<text x="950.3" y="407.28" font-size="8.5" fill="#e6e6e6" text-anchor="middle" font-family="Liberation Serif" stroke="#e6e6e6" stroke-width="0.35">160</text>
<text x="961.17" y="418.88" font-size="8.5" fill="#e6e6e6" text-anchor="middle" font-family="Liberation Serif" stroke="#e6e6e6" stroke-width="0.35">192</text>
<text x="964.44" y="434.43" font-size="8.5" fill="#e6e6e6" text-anchor="middle" font-family="Liberation Serif" stroke="#e6e6e6" stroke-width="0.35">224</text>
<text x="959.16" y="449.42" font-size="8.5" fill="#e6e6e6" text-anchor="middle" font-family="Liberation Serif" stroke="#e6e6e6" stroke-width="0.35">256</text>
<line x1="935.00" y1="429.50" x2="893.86" y2="454.22" stroke="#fff" stroke-width="1.8" stroke-linecap="round"/>
<circle cx="935" cy="429.5" r="6" fill="#e9e4e4" stroke="#b84848" stroke-width="1"/>
<circle cx="935" cy="429.5" r="2.7" fill="#cfcaca"/>
</g>
<clipPath id="cpa"><rect x="692.5" y="484" width="120" height="59.200000000000045"/></clipPath>
<g clip-path="url(#cpa)">
<circle cx="752.5" cy="521" r="52" fill="url(#sring)" stroke="#b8b8b8" stroke-width="0.9"/>
<circle cx="752.5" cy="521" r="48.5" fill="url(#sring2)"/>
<circle cx="752.5" cy="521" r="46" fill="url(#face)" stroke="#444" stroke-width="0.8"/>
<circle cx="752.5" cy="521" r="42.5" fill="none" stroke="#777" stroke-width="0.5" stroke-dasharray="1.2,1.2"/>
<line x1="716.50" y1="547.16" x2="723.78" y2="541.87" stroke="#f0f0f0" stroke-width="1.6"/>
<line x1="712.33" y1="540.16" x2="716.85" y2="538.01" stroke="#d8d8d8" stroke-width="1.1"/>
<line x1="709.52" y1="532.52" x2="718.21" y2="530.19" stroke="#f0f0f0" stroke-width="1.6"/>
<line x1="708.14" y1="524.49" x2="713.12" y2="524.10" stroke="#d8d8d8" stroke-width="1.1"/>
<line x1="708.24" y1="516.35" x2="717.19" y2="517.29" stroke="#f0f0f0" stroke-width="1.6"/>
<line x1="709.83" y1="508.36" x2="714.63" y2="509.78" stroke="#d8d8d8" stroke-width="1.1"/>
<line x1="712.85" y1="500.80" x2="720.87" y2="504.88" stroke="#f0f0f0" stroke-width="1.6"/>
<line x1="717.20" y1="493.91" x2="721.16" y2="496.95" stroke="#d8d8d8" stroke-width="1.1"/>
<line x1="722.72" y1="487.93" x2="728.75" y2="494.62" stroke="#f0f0f0" stroke-width="1.6"/>
<line x1="729.25" y1="483.06" x2="731.86" y2="487.32" stroke="#d8d8d8" stroke-width="1.1"/>
<line x1="736.55" y1="479.46" x2="739.78" y2="487.86" stroke="#f0f0f0" stroke-width="1.6"/>
<line x1="744.39" y1="477.25" x2="745.30" y2="482.16" stroke="#d8d8d8" stroke-width="1.1"/>
<line x1="752.50" y1="476.50" x2="752.50" y2="485.50" stroke="#f0f0f0" stroke-width="1.6"/>
<line x1="760.61" y1="477.25" x2="759.70" y2="482.16" stroke="#d8d8d8" stroke-width="1.1"/>
<line x1="768.45" y1="479.46" x2="765.22" y2="487.86" stroke="#f0f0f0" stroke-width="1.6"/>
<line x1="775.75" y1="483.06" x2="773.14" y2="487.32" stroke="#d8d8d8" stroke-width="1.1"/>
<line x1="782.28" y1="487.93" x2="776.25" y2="494.62" stroke="#f0f0f0" stroke-width="1.6"/>
<line x1="787.80" y1="493.91" x2="783.84" y2="496.95" stroke="#d8d8d8" stroke-width="1.1"/>
<line x1="792.15" y1="500.80" x2="784.13" y2="504.88" stroke="#f0f0f0" stroke-width="1.6"/>
<line x1="795.17" y1="508.36" x2="790.37" y2="509.78" stroke="#d8d8d8" stroke-width="1.1"/>
<line x1="796.76" y1="516.35" x2="787.81" y2="517.29" stroke="#f0f0f0" stroke-width="1.6"/>
<line x1="796.86" y1="524.49" x2="791.88" y2="524.10" stroke="#d8d8d8" stroke-width="1.1"/>
<line x1="795.48" y1="532.52" x2="786.79" y2="530.19" stroke="#f0f0f0" stroke-width="1.6"/>
<line x1="792.67" y1="540.16" x2="788.15" y2="538.01" stroke="#d8d8d8" stroke-width="1.1"/>
<line x1="788.50" y1="547.16" x2="781.22" y2="541.87" stroke="#f0f0f0" stroke-width="1.6"/>
<text x="728.63" y="541.34" font-size="8.5" fill="#e6e6e6" text-anchor="middle" font-family="Liberation Serif" stroke="#e6e6e6" stroke-width="0.35">0</text>
<text x="724.01" y="531.64" font-size="8.5" fill="#e6e6e6" text-anchor="middle" font-family="Liberation Serif" stroke="#e6e6e6" stroke-width="0.35">50</text>
<text x="723.16" y="520.92" font-size="8.5" fill="#e6e6e6" text-anchor="middle" font-family="Liberation Serif" stroke="#e6e6e6" stroke-width="0.35">100</text>
<text x="726.22" y="510.61" font-size="8.5" fill="#e6e6e6" text-anchor="middle" font-family="Liberation Serif" stroke="#e6e6e6" stroke-width="0.35">150</text>
<text x="732.76" y="502.08" font-size="8.5" fill="#e6e6e6" text-anchor="middle" font-family="Liberation Serif" stroke="#e6e6e6" stroke-width="0.35">200</text>
<text x="741.93" y="496.46" font-size="8.5" fill="#e6e6e6" text-anchor="middle" font-family="Liberation Serif" stroke="#e6e6e6" stroke-width="0.35">250</text>
<text x="752.5" y="494.5" font-size="8.5" fill="#e6e6e6" text-anchor="middle" font-family="Liberation Serif" stroke="#e6e6e6" stroke-width="0.35">300</text>
<text x="763.07" y="496.46" font-size="8.5" fill="#e6e6e6" text-anchor="middle" font-family="Liberation Serif" stroke="#e6e6e6" stroke-width="0.35">350</text>
<text x="772.24" y="502.08" font-size="8.5" fill="#e6e6e6" text-anchor="middle" font-family="Liberation Serif" stroke="#e6e6e6" stroke-width="0.35">400</text>
<text x="778.78" y="510.61" font-size="8.5" fill="#e6e6e6" text-anchor="middle" font-family="Liberation Serif" stroke="#e6e6e6" stroke-width="0.35">450</text>
<text x="781.84" y="520.92" font-size="8.5" fill="#e6e6e6" text-anchor="middle" font-family="Liberation Serif" stroke="#e6e6e6" stroke-width="0.35">500</text>
<text x="780.99" y="531.64" font-size="8.5" fill="#e6e6e6" text-anchor="middle" font-family="Liberation Serif" stroke="#e6e6e6" stroke-width="0.35">550</text>
<text x="776.37" y="541.34" font-size="8.5" fill="#e6e6e6" text-anchor="middle" font-family="Liberation Serif" stroke="#e6e6e6" stroke-width="0.35">600</text>
<line x1="752.50" y1="521.00" x2="711.36" y2="545.72" stroke="#fff" stroke-width="1.8" stroke-linecap="round"/>
<circle cx="752.5" cy="521" r="6" fill="#e9e4e4" stroke="#b84848" stroke-width="1"/>
<circle cx="752.5" cy="521" r="2.7" fill="#cfcaca"/>
</g>
<clipPath id="cpc"><rect x="875" y="484" width="120" height="59.200000000000045"/></clipPath>
<g clip-path="url(#cpc)">
<circle cx="935" cy="520.7" r="52" fill="url(#sring)" stroke="#b8b8b8" stroke-width="0.9"/>
<circle cx="935" cy="520.7" r="48.5" fill="url(#sring2)"/>
<circle cx="935" cy="520.7" r="46" fill="url(#face)" stroke="#444" stroke-width="0.8"/>
<circle cx="935" cy="520.7" r="42.5" fill="none" stroke="#777" stroke-width="0.5" stroke-dasharray="1.2,1.2"/>
<line x1="899.00" y1="546.86" x2="906.28" y2="541.57" stroke="#f0f0f0" stroke-width="1.6"/>
<line x1="894.83" y1="539.86" x2="899.35" y2="537.71" stroke="#d8d8d8" stroke-width="1.1"/>
<line x1="892.02" y1="532.22" x2="900.71" y2="529.89" stroke="#f0f0f0" stroke-width="1.6"/>
<line x1="890.64" y1="524.19" x2="895.62" y2="523.80" stroke="#d8d8d8" stroke-width="1.1"/>
<line x1="890.74" y1="516.05" x2="899.69" y2="516.99" stroke="#f0f0f0" stroke-width="1.6"/>
<line x1="892.33" y1="508.06" x2="897.13" y2="509.48" stroke="#d8d8d8" stroke-width="1.1"/>
<line x1="895.35" y1="500.50" x2="903.37" y2="504.58" stroke="#f0f0f0" stroke-width="1.6"/>
<line x1="899.70" y1="493.61" x2="903.66" y2="496.65" stroke="#d8d8d8" stroke-width="1.1"/>
<line x1="905.22" y1="487.63" x2="911.25" y2="494.32" stroke="#f0f0f0" stroke-width="1.6"/>
<line x1="911.75" y1="482.76" x2="914.36" y2="487.02" stroke="#d8d8d8" stroke-width="1.1"/>
<line x1="919.05" y1="479.16" x2="922.28" y2="487.56" stroke="#f0f0f0" stroke-width="1.6"/>
<line x1="926.89" y1="476.95" x2="927.80" y2="481.86" stroke="#d8d8d8" stroke-width="1.1"/>
<line x1="935.00" y1="476.20" x2="935.00" y2="485.20" stroke="#f0f0f0" stroke-width="1.6"/>
<line x1="943.11" y1="476.95" x2="942.20" y2="481.86" stroke="#d8d8d8" stroke-width="1.1"/>
<line x1="950.95" y1="479.16" x2="947.72" y2="487.56" stroke="#f0f0f0" stroke-width="1.6"/>
<line x1="958.25" y1="482.76" x2="955.64" y2="487.02" stroke="#d8d8d8" stroke-width="1.1"/>
<line x1="964.78" y1="487.63" x2="958.75" y2="494.32" stroke="#f0f0f0" stroke-width="1.6"/>
<line x1="970.30" y1="493.61" x2="966.34" y2="496.65" stroke="#d8d8d8" stroke-width="1.1"/>
<line x1="974.65" y1="500.50" x2="966.63" y2="504.58" stroke="#f0f0f0" stroke-width="1.6"/>
<line x1="977.67" y1="508.06" x2="972.87" y2="509.48" stroke="#d8d8d8" stroke-width="1.1"/>
<line x1="979.26" y1="516.05" x2="970.31" y2="516.99" stroke="#f0f0f0" stroke-width="1.6"/>
<line x1="979.36" y1="524.19" x2="974.38" y2="523.80" stroke="#d8d8d8" stroke-width="1.1"/>
<line x1="977.98" y1="532.22" x2="969.29" y2="529.89" stroke="#f0f0f0" stroke-width="1.6"/>
<line x1="975.17" y1="539.86" x2="970.65" y2="537.71" stroke="#d8d8d8" stroke-width="1.1"/>
<line x1="971.00" y1="546.86" x2="963.72" y2="541.57" stroke="#f0f0f0" stroke-width="1.6"/>
<text x="911.13" y="541.04" font-size="8.5" fill="#e6e6e6" text-anchor="middle" font-family="Liberation Serif" stroke="#e6e6e6" stroke-width="0.35">0</text>
<text x="906.51" y="531.34" font-size="8.5" fill="#e6e6e6" text-anchor="middle" font-family="Liberation Serif" stroke="#e6e6e6" stroke-width="0.35">50</text>
<text x="905.66" y="520.62" font-size="8.5" fill="#e6e6e6" text-anchor="middle" font-family="Liberation Serif" stroke="#e6e6e6" stroke-width="0.35">100</text>
<text x="908.72" y="510.31" font-size="8.5" fill="#e6e6e6" text-anchor="middle" font-family="Liberation Serif" stroke="#e6e6e6" stroke-width="0.35">150</text>
<text x="915.26" y="501.78" font-size="8.5" fill="#e6e6e6" text-anchor="middle" font-family="Liberation Serif" stroke="#e6e6e6" stroke-width="0.35">200</text>
<text x="924.43" y="496.16" font-size="8.5" fill="#e6e6e6" text-anchor="middle" font-family="Liberation Serif" stroke="#e6e6e6" stroke-width="0.35">250</text>
<text x="935.0" y="494.2" font-size="8.5" fill="#e6e6e6" text-anchor="middle" font-family="Liberation Serif" stroke="#e6e6e6" stroke-width="0.35">300</text>
<text x="945.57" y="496.16" font-size="8.5" fill="#e6e6e6" text-anchor="middle" font-family="Liberation Serif" stroke="#e6e6e6" stroke-width="0.35">350</text>
<text x="954.74" y="501.78" font-size="8.5" fill="#e6e6e6" text-anchor="middle" font-family="Liberation Serif" stroke="#e6e6e6" stroke-width="0.35">400</text>
<text x="961.28" y="510.31" font-size="8.5" fill="#e6e6e6" text-anchor="middle" font-family="Liberation Serif" stroke="#e6e6e6" stroke-width="0.35">450</text>
<text x="964.34" y="520.62" font-size="8.5" fill="#e6e6e6" text-anchor="middle" font-family="Liberation Serif" stroke="#e6e6e6" stroke-width="0.35">500</text>
<text x="963.49" y="531.34" font-size="8.5" fill="#e6e6e6" text-anchor="middle" font-family="Liberation Serif" stroke="#e6e6e6" stroke-width="0.35">550</text>
<text x="958.87" y="541.04" font-size="8.5" fill="#e6e6e6" text-anchor="middle" font-family="Liberation Serif" stroke="#e6e6e6" stroke-width="0.35">600</text>
<line x1="935.00" y1="520.70" x2="893.86" y2="545.42" stroke="#fff" stroke-width="1.8" stroke-linecap="round"/>
<circle cx="935" cy="520.7" r="6" fill="#e9e4e4" stroke="#b84848" stroke-width="1"/>
<circle cx="935" cy="520.7" r="2.7" fill="#cfcaca"/>
</g>
<text x="927" y="445.5" font-size="14" fill="#e8e03a" stroke="#e8e03a" stroke-width="0.3">0</text>
<circle cx="843" cy="423" r="18" fill="#fff" stroke="#22a043" stroke-width="4.6"/>
<path d="M832.5,422.5 L840.5,430.5 L854.5,416" fill="none" stroke="#22a043" stroke-width="6" stroke-linecap="round" stroke-linejoin="round"/>
<text x="752.5" y="474" font-size="12" fill="#2b7a2f" text-anchor="middle" textLength="63" lengthAdjust="spacingAndGlyphs" stroke="#2b7a2f" stroke-width="0.3">LineCurr:0A</text>
<text x="843" y="474" font-size="12" fill="#2b7a2f" text-anchor="middle" textLength="30" lengthAdjust="spacingAndGlyphs" stroke="#2b7a2f" stroke-width="0.3">MTPA</text>
<text x="934.5" y="474" font-size="12" fill="#b49a3c" text-anchor="middle" textLength="102" lengthAdjust="spacingAndGlyphs" stroke="#b49a3c" stroke-width="0.3">Throttle 256/3.94V</text>
<text x="752" y="557" font-size="12" fill="#2b7a2f" text-anchor="middle" textLength="60" lengthAdjust="spacingAndGlyphs" stroke="#2b7a2f" stroke-width="0.3">Phase A:0A</text>
<text x="934" y="557" font-size="12" fill="#2b7a2f" text-anchor="middle" textLength="60" lengthAdjust="spacingAndGlyphs" stroke="#2b7a2f" stroke-width="0.3">Phase C:0A</text>
<text x="687" y="576" font-size="12" fill="#2c2ca0" textLength="71" lengthAdjust="spacingAndGlyphs" stroke="#2c2ca0" stroke-width="0.3">Rcv Frames:0</text>
<text x="765" y="576" font-size="12" fill="#d03a3a" textLength="72" lengthAdjust="spacingAndGlyphs" stroke="#d03a3a" stroke-width="0.3">Disconnected</text>
<rect x="690.0" y="618.5" width="83.5" height="37.0" fill="#c4c4c4" opacity="0.6"/>
<rect x="689.5" y="617.5" width="83.5" height="37.0" fill="#d7d7d7"/>
<text x="731.25" y="633.5" font-size="12" fill="#151515" font-weight="bold" text-anchor="middle" textLength="44" lengthAdjust="spacingAndGlyphs" stroke="#151515" stroke-width="0.15">CANCEL</text>
<text x="731.25" y="647.5" font-size="12" fill="#151515" font-weight="bold" text-anchor="middle" textLength="46" lengthAdjust="spacingAndGlyphs" stroke="#151515" stroke-width="0.15">FOLLOW</text>
<rect x="779.5" y="622" width="83" height="29.5" fill="#c4c4c4" opacity="0.6"/>
<rect x="779" y="621" width="83" height="29.5" fill="#d7d7d7"/>
<text x="820.5" y="640.05" font-size="12" fill="#151515" font-weight="bold" text-anchor="middle" textLength="68" lengthAdjust="spacingAndGlyphs" stroke="#151515" stroke-width="0.15">ANGLE TEST</text>
<rect x="869.5" y="618.5" width="60" height="37.0" fill="#c4c4c4" opacity="0.6"/>
<rect x="869" y="617.5" width="60" height="37.0" fill="#d7d7d7"/>
<text x="899.0" y="633.5" font-size="12" fill="#151515" font-weight="bold" text-anchor="middle" textLength="29" lengthAdjust="spacingAndGlyphs" stroke="#151515" stroke-width="0.15">AUTO</text>
<text x="899.0" y="647.5" font-size="12" fill="#151515" font-weight="bold" text-anchor="middle" textLength="35" lengthAdjust="spacingAndGlyphs" stroke="#151515" stroke-width="0.15">LEARN</text>
<rect x="936.5" y="622" width="61" height="29.5" fill="#c4c4c4" opacity="0.6"/>
<rect x="936" y="621" width="61" height="29.5" fill="#d7d7d7"/>
<text x="966.5" y="640.05" font-size="12" fill="#151515" font-weight="bold" text-anchor="middle" textLength="30" lengthAdjust="spacingAndGlyphs" stroke="#151515" stroke-width="0.15">SAVE</text>
<rect x="786" y="671" width="115" height="3.5" rx="1.75" fill="#111"/>
<mask id="wmk" maskUnits="userSpaceOnUse" x="0" y="0" width="1000" height="679"><rect width="1000" height="679" fill="#fff"/><circle cx="150" cy="150" r="23" fill="#000"/><circle cx="450" cy="150" r="23" fill="#000"/><circle cx="750" cy="150" r="23" fill="#000"/><circle cx="150" cy="450" r="23" fill="#000"/><circle cx="450" cy="450" r="23" fill="#000"/><circle cx="750" cy="450" r="23" fill="#000"/></mask>
<path d="M1200,0 L1000,-200 M900,0 L1000,100 M600,0 L1000,400 M300,0 L1000,700 M0,0 L1000,1000 M0,300 L1000,1300 M0,600 L1000,1600 M0,0 L0,0 M0,300 L300,0 M0,600 L600,0 M0,900 L900,0 M0,1200 L1200,0 M0,1500 L1500,0 M0,1800 L1800,0" stroke="#c3c3c3" stroke-opacity="0.32" stroke-width="1" fill="none" mask="url(#wmk)"/>
<g transform="translate(150,150)" fill="#d3d3d3" stroke="#d3d3d3" stroke-linecap="round" stroke-linejoin="round"><path d="M0.5,-18.5 L-6,-9 L3,-9 Z" stroke-width="2.2"/><rect x="-6.4" y="-9" width="16.8" height="9.5" rx="4" stroke="none"/><circle cx="-9.5" cy="-0.8" r="2.6" stroke="none"/><line x1="-15" y1="6.5" x2="-20" y2="17" stroke-width="4"/><path fill-rule="evenodd" stroke="none" d="M-9.8,5 L14,5 L21.5,18 L16.5,18 L14.5,14.4 L-10.5,14.4 L-11.8,18 L-15.3,18 Z M-5,8.2 L13.2,8.2 L13.2,11 L-5,11 Z"/></g>
<g transform="translate(450,150)" fill="#d3d3d3" stroke="#d3d3d3" stroke-linecap="round" stroke-linejoin="round"><path d="M0.5,-18.5 L-6,-9 L3,-9 Z" stroke-width="2.2"/><rect x="-6.4" y="-9" width="16.8" height="9.5" rx="4" stroke="none"/><circle cx="-9.5" cy="-0.8" r="2.6" stroke="none"/><line x1="-15" y1="6.5" x2="-20" y2="17" stroke-width="4"/><path fill-rule="evenodd" stroke="none" d="M-9.8,5 L14,5 L21.5,18 L16.5,18 L14.5,14.4 L-10.5,14.4 L-11.8,18 L-15.3,18 Z M-5,8.2 L13.2,8.2 L13.2,11 L-5,11 Z"/></g>
<g transform="translate(750,150)" fill="#d3d3d3" stroke="#d3d3d3" stroke-linecap="round" stroke-linejoin="round"><path d="M0.5,-18.5 L-6,-9 L3,-9 Z" stroke-width="2.2"/><rect x="-6.4" y="-9" width="16.8" height="9.5" rx="4" stroke="none"/><circle cx="-9.5" cy="-0.8" r="2.6" stroke="none"/><line x1="-15" y1="6.5" x2="-20" y2="17" stroke-width="4"/><path fill-rule="evenodd" stroke="none" d="M-9.8,5 L14,5 L21.5,18 L16.5,18 L14.5,14.4 L-10.5,14.4 L-11.8,18 L-15.3,18 Z M-5,8.2 L13.2,8.2 L13.2,11 L-5,11 Z"/></g>
<g transform="translate(150,450)" fill="#d3d3d3" stroke="#d3d3d3" stroke-linecap="round" stroke-linejoin="round"><path d="M0.5,-18.5 L-6,-9 L3,-9 Z" stroke-width="2.2"/><rect x="-6.4" y="-9" width="16.8" height="9.5" rx="4" stroke="none"/><circle cx="-9.5" cy="-0.8" r="2.6" stroke="none"/><line x1="-15" y1="6.5" x2="-20" y2="17" stroke-width="4"/><path fill-rule="evenodd" stroke="none" d="M-9.8,5 L14,5 L21.5,18 L16.5,18 L14.5,14.4 L-10.5,14.4 L-11.8,18 L-15.3,18 Z M-5,8.2 L13.2,8.2 L13.2,11 L-5,11 Z"/></g>
<g transform="translate(450,450)" fill="#d3d3d3" stroke="#d3d3d3" stroke-linecap="round" stroke-linejoin="round"><path d="M0.5,-18.5 L-6,-9 L3,-9 Z" stroke-width="2.2"/><rect x="-6.4" y="-9" width="16.8" height="9.5" rx="4" stroke="none"/><circle cx="-9.5" cy="-0.8" r="2.6" stroke="none"/><line x1="-15" y1="6.5" x2="-20" y2="17" stroke-width="4"/><path fill-rule="evenodd" stroke="none" d="M-9.8,5 L14,5 L21.5,18 L16.5,18 L14.5,14.4 L-10.5,14.4 L-11.8,18 L-15.3,18 Z M-5,8.2 L13.2,8.2 L13.2,11 L-5,11 Z"/></g>
<g transform="translate(750,450)" fill="#d3d3d3" stroke="#d3d3d3" stroke-linecap="round" stroke-linejoin="round"><path d="M0.5,-18.5 L-6,-9 L3,-9 Z" stroke-width="2.2"/><rect x="-6.4" y="-9" width="16.8" height="9.5" rx="4" stroke="none"/><circle cx="-9.5" cy="-0.8" r="2.6" stroke="none"/><line x1="-15" y1="6.5" x2="-20" y2="17" stroke-width="4"/><path fill-rule="evenodd" stroke="none" d="M-9.8,5 L14,5 L21.5,18 L16.5,18 L14.5,14.4 L-10.5,14.4 L-11.8,18 L-15.3,18 Z M-5,8.2 L13.2,8.2 L13.2,11 L-5,11 Z"/></g>
</svg></body></html>
